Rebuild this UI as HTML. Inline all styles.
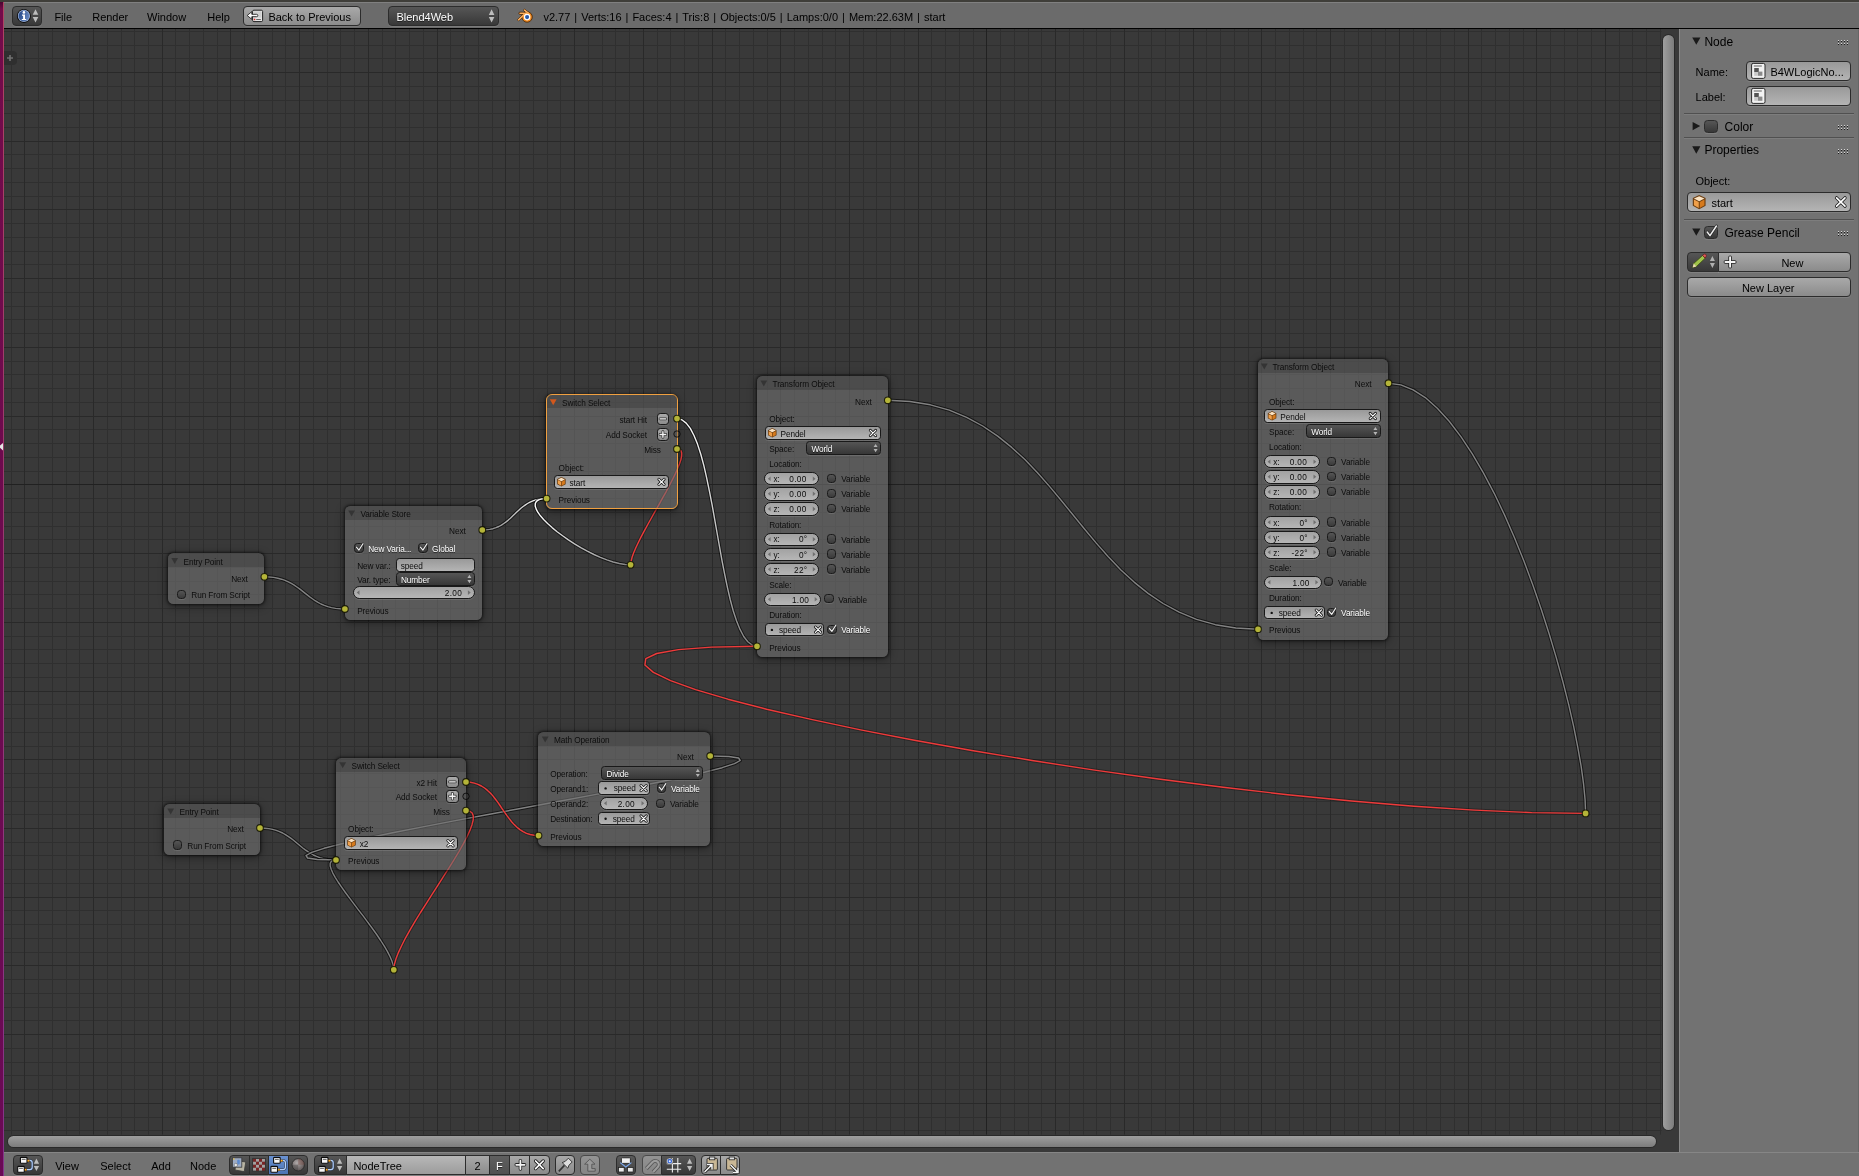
<!DOCTYPE html>
<html><head><meta charset="utf-8"><title>Blender</title>
<style>
html,body{margin:0;padding:0;}
html{overflow:hidden;width:1859px;height:1176px;}
body{width:1859px;height:1176px;overflow:hidden;position:relative;background:#393939;font-family:"Liberation Sans", sans-serif;}
.t{position:absolute;white-space:nowrap;line-height:1;font-family:"Liberation Sans", sans-serif;}
.b{position:absolute;box-sizing:border-box;}
svg{position:absolute;left:0;top:0;overflow:visible;}
#w{position:absolute;left:0;top:0;width:1859px;height:1176px;will-change:transform;overflow:hidden;}
</style></head><body><div id="w">
<svg width="1859" height="1176"><defs><linearGradient id="g0" gradientUnits="userSpaceOnUse" x1="482.3" y1="530.0" x2="546.6" y2="498.6"><stop offset="0" stop-color="#828282"/><stop offset="1" stop-color="#ffffff"/></linearGradient><linearGradient id="g1" gradientUnits="userSpaceOnUse" x1="630.6" y1="564.8" x2="546.6" y2="498.6"><stop offset="0" stop-color="#828282"/><stop offset="1" stop-color="#ffffff"/></linearGradient><linearGradient id="g2" gradientUnits="userSpaceOnUse" x1="677.0" y1="418.6" x2="757.0" y2="646.3"><stop offset="0" stop-color="#ffffff"/><stop offset="1" stop-color="#828282"/></linearGradient></defs><rect x="11" y="29" width="1" height="1105.5" fill="#2f2f2f"/><rect x="38" y="29" width="1" height="1105.5" fill="#2f2f2f"/><rect x="52" y="29" width="1" height="1105.5" fill="#2f2f2f"/><rect x="66" y="29" width="1" height="1105.5" fill="#2f2f2f"/><rect x="79" y="29" width="1" height="1105.5" fill="#2f2f2f"/><rect x="107" y="29" width="1" height="1105.5" fill="#2f2f2f"/><rect x="121" y="29" width="1" height="1105.5" fill="#2f2f2f"/><rect x="134" y="29" width="1" height="1105.5" fill="#2f2f2f"/><rect x="148" y="29" width="1" height="1105.5" fill="#2f2f2f"/><rect x="175" y="29" width="1" height="1105.5" fill="#2f2f2f"/><rect x="189" y="29" width="1" height="1105.5" fill="#2f2f2f"/><rect x="203" y="29" width="1" height="1105.5" fill="#2f2f2f"/><rect x="217" y="29" width="1" height="1105.5" fill="#2f2f2f"/><rect x="244" y="29" width="1" height="1105.5" fill="#2f2f2f"/><rect x="258" y="29" width="1" height="1105.5" fill="#2f2f2f"/><rect x="272" y="29" width="1" height="1105.5" fill="#2f2f2f"/><rect x="285" y="29" width="1" height="1105.5" fill="#2f2f2f"/><rect x="313" y="29" width="1" height="1105.5" fill="#2f2f2f"/><rect x="327" y="29" width="1" height="1105.5" fill="#2f2f2f"/><rect x="340" y="29" width="1" height="1105.5" fill="#2f2f2f"/><rect x="354" y="29" width="1" height="1105.5" fill="#2f2f2f"/><rect x="382" y="29" width="1" height="1105.5" fill="#2f2f2f"/><rect x="395" y="29" width="1" height="1105.5" fill="#2f2f2f"/><rect x="409" y="29" width="1" height="1105.5" fill="#2f2f2f"/><rect x="423" y="29" width="1" height="1105.5" fill="#2f2f2f"/><rect x="450" y="29" width="1" height="1105.5" fill="#2f2f2f"/><rect x="464" y="29" width="1" height="1105.5" fill="#2f2f2f"/><rect x="478" y="29" width="1" height="1105.5" fill="#2f2f2f"/><rect x="492" y="29" width="1" height="1105.5" fill="#2f2f2f"/><rect x="519" y="29" width="1" height="1105.5" fill="#2f2f2f"/><rect x="533" y="29" width="1" height="1105.5" fill="#2f2f2f"/><rect x="547" y="29" width="1" height="1105.5" fill="#2f2f2f"/><rect x="560" y="29" width="1" height="1105.5" fill="#2f2f2f"/><rect x="588" y="29" width="1" height="1105.5" fill="#2f2f2f"/><rect x="602" y="29" width="1" height="1105.5" fill="#2f2f2f"/><rect x="615" y="29" width="1" height="1105.5" fill="#2f2f2f"/><rect x="629" y="29" width="1" height="1105.5" fill="#2f2f2f"/><rect x="657" y="29" width="1" height="1105.5" fill="#2f2f2f"/><rect x="670" y="29" width="1" height="1105.5" fill="#2f2f2f"/><rect x="684" y="29" width="1" height="1105.5" fill="#2f2f2f"/><rect x="698" y="29" width="1" height="1105.5" fill="#2f2f2f"/><rect x="725" y="29" width="1" height="1105.5" fill="#2f2f2f"/><rect x="739" y="29" width="1" height="1105.5" fill="#2f2f2f"/><rect x="753" y="29" width="1" height="1105.5" fill="#2f2f2f"/><rect x="767" y="29" width="1" height="1105.5" fill="#2f2f2f"/><rect x="794" y="29" width="1" height="1105.5" fill="#2f2f2f"/><rect x="808" y="29" width="1" height="1105.5" fill="#2f2f2f"/><rect x="822" y="29" width="1" height="1105.5" fill="#2f2f2f"/><rect x="835" y="29" width="1" height="1105.5" fill="#2f2f2f"/><rect x="863" y="29" width="1" height="1105.5" fill="#2f2f2f"/><rect x="876" y="29" width="1" height="1105.5" fill="#2f2f2f"/><rect x="890" y="29" width="1" height="1105.5" fill="#2f2f2f"/><rect x="904" y="29" width="1" height="1105.5" fill="#2f2f2f"/><rect x="931" y="29" width="1" height="1105.5" fill="#2f2f2f"/><rect x="945" y="29" width="1" height="1105.5" fill="#2f2f2f"/><rect x="959" y="29" width="1" height="1105.5" fill="#2f2f2f"/><rect x="973" y="29" width="1" height="1105.5" fill="#2f2f2f"/><rect x="1000" y="29" width="1" height="1105.5" fill="#2f2f2f"/><rect x="1014" y="29" width="1" height="1105.5" fill="#2f2f2f"/><rect x="1028" y="29" width="1" height="1105.5" fill="#2f2f2f"/><rect x="1041" y="29" width="1" height="1105.5" fill="#2f2f2f"/><rect x="1069" y="29" width="1" height="1105.5" fill="#2f2f2f"/><rect x="1083" y="29" width="1" height="1105.5" fill="#2f2f2f"/><rect x="1096" y="29" width="1" height="1105.5" fill="#2f2f2f"/><rect x="1110" y="29" width="1" height="1105.5" fill="#2f2f2f"/><rect x="1138" y="29" width="1" height="1105.5" fill="#2f2f2f"/><rect x="1151" y="29" width="1" height="1105.5" fill="#2f2f2f"/><rect x="1165" y="29" width="1" height="1105.5" fill="#2f2f2f"/><rect x="1179" y="29" width="1" height="1105.5" fill="#2f2f2f"/><rect x="1206" y="29" width="1" height="1105.5" fill="#2f2f2f"/><rect x="1220" y="29" width="1" height="1105.5" fill="#2f2f2f"/><rect x="1234" y="29" width="1" height="1105.5" fill="#2f2f2f"/><rect x="1248" y="29" width="1" height="1105.5" fill="#2f2f2f"/><rect x="1275" y="29" width="1" height="1105.5" fill="#2f2f2f"/><rect x="1289" y="29" width="1" height="1105.5" fill="#2f2f2f"/><rect x="1303" y="29" width="1" height="1105.5" fill="#2f2f2f"/><rect x="1316" y="29" width="1" height="1105.5" fill="#2f2f2f"/><rect x="1344" y="29" width="1" height="1105.5" fill="#2f2f2f"/><rect x="1358" y="29" width="1" height="1105.5" fill="#2f2f2f"/><rect x="1371" y="29" width="1" height="1105.5" fill="#2f2f2f"/><rect x="1385" y="29" width="1" height="1105.5" fill="#2f2f2f"/><rect x="1413" y="29" width="1" height="1105.5" fill="#2f2f2f"/><rect x="1426" y="29" width="1" height="1105.5" fill="#2f2f2f"/><rect x="1440" y="29" width="1" height="1105.5" fill="#2f2f2f"/><rect x="1454" y="29" width="1" height="1105.5" fill="#2f2f2f"/><rect x="1481" y="29" width="1" height="1105.5" fill="#2f2f2f"/><rect x="1495" y="29" width="1" height="1105.5" fill="#2f2f2f"/><rect x="1509" y="29" width="1" height="1105.5" fill="#2f2f2f"/><rect x="1523" y="29" width="1" height="1105.5" fill="#2f2f2f"/><rect x="1550" y="29" width="1" height="1105.5" fill="#2f2f2f"/><rect x="1564" y="29" width="1" height="1105.5" fill="#2f2f2f"/><rect x="1577" y="29" width="1" height="1105.5" fill="#2f2f2f"/><rect x="1591" y="29" width="1" height="1105.5" fill="#2f2f2f"/><rect x="1619" y="29" width="1" height="1105.5" fill="#2f2f2f"/><rect x="1632" y="29" width="1" height="1105.5" fill="#2f2f2f"/><rect x="1646" y="29" width="1" height="1105.5" fill="#2f2f2f"/><rect x="1660" y="29" width="1" height="1105.5" fill="#2f2f2f"/><rect x="4" y="31" width="1657.5" height="1" fill="#2f2f2f"/><rect x="4" y="45" width="1657.5" height="1" fill="#2f2f2f"/><rect x="4" y="58" width="1657.5" height="1" fill="#2f2f2f"/><rect x="4" y="86" width="1657.5" height="1" fill="#2f2f2f"/><rect x="4" y="100" width="1657.5" height="1" fill="#2f2f2f"/><rect x="4" y="113" width="1657.5" height="1" fill="#2f2f2f"/><rect x="4" y="127" width="1657.5" height="1" fill="#2f2f2f"/><rect x="4" y="154" width="1657.5" height="1" fill="#2f2f2f"/><rect x="4" y="168" width="1657.5" height="1" fill="#2f2f2f"/><rect x="4" y="182" width="1657.5" height="1" fill="#2f2f2f"/><rect x="4" y="196" width="1657.5" height="1" fill="#2f2f2f"/><rect x="4" y="223" width="1657.5" height="1" fill="#2f2f2f"/><rect x="4" y="237" width="1657.5" height="1" fill="#2f2f2f"/><rect x="4" y="251" width="1657.5" height="1" fill="#2f2f2f"/><rect x="4" y="264" width="1657.5" height="1" fill="#2f2f2f"/><rect x="4" y="292" width="1657.5" height="1" fill="#2f2f2f"/><rect x="4" y="306" width="1657.5" height="1" fill="#2f2f2f"/><rect x="4" y="319" width="1657.5" height="1" fill="#2f2f2f"/><rect x="4" y="333" width="1657.5" height="1" fill="#2f2f2f"/><rect x="4" y="361" width="1657.5" height="1" fill="#2f2f2f"/><rect x="4" y="374" width="1657.5" height="1" fill="#2f2f2f"/><rect x="4" y="388" width="1657.5" height="1" fill="#2f2f2f"/><rect x="4" y="402" width="1657.5" height="1" fill="#2f2f2f"/><rect x="4" y="429" width="1657.5" height="1" fill="#2f2f2f"/><rect x="4" y="443" width="1657.5" height="1" fill="#2f2f2f"/><rect x="4" y="457" width="1657.5" height="1" fill="#2f2f2f"/><rect x="4" y="471" width="1657.5" height="1" fill="#2f2f2f"/><rect x="4" y="498" width="1657.5" height="1" fill="#2f2f2f"/><rect x="4" y="512" width="1657.5" height="1" fill="#2f2f2f"/><rect x="4" y="526" width="1657.5" height="1" fill="#2f2f2f"/><rect x="4" y="539" width="1657.5" height="1" fill="#2f2f2f"/><rect x="4" y="567" width="1657.5" height="1" fill="#2f2f2f"/><rect x="4" y="581" width="1657.5" height="1" fill="#2f2f2f"/><rect x="4" y="594" width="1657.5" height="1" fill="#2f2f2f"/><rect x="4" y="608" width="1657.5" height="1" fill="#2f2f2f"/><rect x="4" y="636" width="1657.5" height="1" fill="#2f2f2f"/><rect x="4" y="649" width="1657.5" height="1" fill="#2f2f2f"/><rect x="4" y="663" width="1657.5" height="1" fill="#2f2f2f"/><rect x="4" y="677" width="1657.5" height="1" fill="#2f2f2f"/><rect x="4" y="704" width="1657.5" height="1" fill="#2f2f2f"/><rect x="4" y="718" width="1657.5" height="1" fill="#2f2f2f"/><rect x="4" y="732" width="1657.5" height="1" fill="#2f2f2f"/><rect x="4" y="746" width="1657.5" height="1" fill="#2f2f2f"/><rect x="4" y="773" width="1657.5" height="1" fill="#2f2f2f"/><rect x="4" y="787" width="1657.5" height="1" fill="#2f2f2f"/><rect x="4" y="801" width="1657.5" height="1" fill="#2f2f2f"/><rect x="4" y="814" width="1657.5" height="1" fill="#2f2f2f"/><rect x="4" y="842" width="1657.5" height="1" fill="#2f2f2f"/><rect x="4" y="855" width="1657.5" height="1" fill="#2f2f2f"/><rect x="4" y="869" width="1657.5" height="1" fill="#2f2f2f"/><rect x="4" y="883" width="1657.5" height="1" fill="#2f2f2f"/><rect x="4" y="910" width="1657.5" height="1" fill="#2f2f2f"/><rect x="4" y="924" width="1657.5" height="1" fill="#2f2f2f"/><rect x="4" y="938" width="1657.5" height="1" fill="#2f2f2f"/><rect x="4" y="952" width="1657.5" height="1" fill="#2f2f2f"/><rect x="4" y="979" width="1657.5" height="1" fill="#2f2f2f"/><rect x="4" y="993" width="1657.5" height="1" fill="#2f2f2f"/><rect x="4" y="1007" width="1657.5" height="1" fill="#2f2f2f"/><rect x="4" y="1020" width="1657.5" height="1" fill="#2f2f2f"/><rect x="4" y="1048" width="1657.5" height="1" fill="#2f2f2f"/><rect x="4" y="1062" width="1657.5" height="1" fill="#2f2f2f"/><rect x="4" y="1075" width="1657.5" height="1" fill="#2f2f2f"/><rect x="4" y="1089" width="1657.5" height="1" fill="#2f2f2f"/><rect x="4" y="1117" width="1657.5" height="1" fill="#2f2f2f"/><rect x="4" y="1130" width="1657.5" height="1" fill="#2f2f2f"/><rect x="24" y="29" width="1" height="1105.5" fill="#292929"/><rect x="93" y="29" width="1" height="1105.5" fill="#292929"/><rect x="162" y="29" width="1" height="1105.5" fill="#292929"/><rect x="230" y="29" width="1" height="1105.5" fill="#292929"/><rect x="299" y="29" width="1" height="1105.5" fill="#292929"/><rect x="368" y="29" width="1" height="1105.5" fill="#292929"/><rect x="437" y="29" width="1" height="1105.5" fill="#292929"/><rect x="505" y="29" width="1" height="1105.5" fill="#292929"/><rect x="574" y="29" width="1" height="1105.5" fill="#292929"/><rect x="643" y="29" width="1" height="1105.5" fill="#292929"/><rect x="712" y="29" width="1" height="1105.5" fill="#292929"/><rect x="780" y="29" width="1" height="1105.5" fill="#292929"/><rect x="849" y="29" width="1" height="1105.5" fill="#292929"/><rect x="918" y="29" width="1" height="1105.5" fill="#292929"/><rect x="1055" y="29" width="1" height="1105.5" fill="#292929"/><rect x="1124" y="29" width="1" height="1105.5" fill="#292929"/><rect x="1193" y="29" width="1" height="1105.5" fill="#292929"/><rect x="1261" y="29" width="1" height="1105.5" fill="#292929"/><rect x="1330" y="29" width="1" height="1105.5" fill="#292929"/><rect x="1399" y="29" width="1" height="1105.5" fill="#292929"/><rect x="1468" y="29" width="1" height="1105.5" fill="#292929"/><rect x="1536" y="29" width="1" height="1105.5" fill="#292929"/><rect x="1605" y="29" width="1" height="1105.5" fill="#292929"/><rect x="4" y="72" width="1657.5" height="1" fill="#292929"/><rect x="4" y="141" width="1657.5" height="1" fill="#292929"/><rect x="4" y="209" width="1657.5" height="1" fill="#292929"/><rect x="4" y="278" width="1657.5" height="1" fill="#292929"/><rect x="4" y="347" width="1657.5" height="1" fill="#292929"/><rect x="4" y="416" width="1657.5" height="1" fill="#292929"/><rect x="4" y="553" width="1657.5" height="1" fill="#292929"/><rect x="4" y="622" width="1657.5" height="1" fill="#292929"/><rect x="4" y="691" width="1657.5" height="1" fill="#292929"/><rect x="4" y="759" width="1657.5" height="1" fill="#292929"/><rect x="4" y="828" width="1657.5" height="1" fill="#292929"/><rect x="4" y="897" width="1657.5" height="1" fill="#292929"/><rect x="4" y="965" width="1657.5" height="1" fill="#292929"/><rect x="4" y="1034" width="1657.5" height="1" fill="#292929"/><rect x="4" y="1103" width="1657.5" height="1" fill="#292929"/><rect x="986" y="29" width="1" height="1105.5" fill="#212121"/><rect x="4" y="484" width="1657.5" height="1" fill="#212121"/><path d="M264.4,576.8 L269.2,577.0 L273.7,577.4 L277.8,578.2 L281.5,579.2 L285.0,580.4 L288.3,581.8 L291.3,583.4 L294.2,585.1 L296.9,587.0 L299.6,588.9 L302.1,590.9 L304.6,592.9 L307.2,594.9 L309.7,596.9 L312.4,598.8 L315.1,600.7 L318.0,602.4 L321.0,604.0 L324.3,605.4 L327.8,606.6 L331.5,607.6 L335.6,608.4 L340.1,608.8 L344.9,609.0" fill="none" stroke="rgba(0,0,0,0.6)" stroke-width="3.4" stroke-linejoin="round"/><path d="M264.4,576.8 L269.2,577.0 L273.7,577.4 L277.8,578.2 L281.5,579.2 L285.0,580.4 L288.3,581.8 L291.3,583.4 L294.2,585.1 L296.9,587.0 L299.6,588.9 L302.1,590.9 L304.6,592.9 L307.2,594.9 L309.7,596.9 L312.4,598.8 L315.1,600.7 L318.0,602.4 L321.0,604.0 L324.3,605.4 L327.8,606.6 L331.5,607.6 L335.6,608.4 L340.1,608.8 L344.9,609.0" fill="none" stroke="#828282" stroke-width="1.4" stroke-linejoin="round"/><path d="M482.3,530.0 L486.2,529.8 L489.7,529.4 L493.0,528.7 L496.0,527.7 L498.8,526.5 L501.4,525.1 L503.8,523.5 L506.1,521.9 L508.3,520.1 L510.4,518.2 L512.4,516.3 L514.5,514.3 L516.5,512.3 L518.5,510.4 L520.6,508.5 L522.8,506.7 L525.1,505.1 L527.5,503.5 L530.1,502.1 L532.9,500.9 L535.9,499.9 L539.2,499.2 L542.7,498.8 L546.6,498.6" fill="none" stroke="rgba(0,0,0,0.6)" stroke-width="3.4" stroke-linejoin="round"/><path d="M482.3,530.0 L486.2,529.8 L489.7,529.4 L493.0,528.7 L496.0,527.7 L498.8,526.5 L501.4,525.1 L503.8,523.5 L506.1,521.9 L508.3,520.1 L510.4,518.2 L512.4,516.3 L514.5,514.3 L516.5,512.3 L518.5,510.4 L520.6,508.5 L522.8,506.7 L525.1,505.1 L527.5,503.5 L530.1,502.1 L532.9,500.9 L535.9,499.9 L539.2,499.2 L542.7,498.8 L546.6,498.6" fill="none" stroke="url(#g0)" stroke-width="1.4" stroke-linejoin="round"/><path d="M630.6,564.8 L625.1,564.5 L619.3,563.5 L613.2,562.0 L606.9,559.9 L600.4,557.4 L593.9,554.5 L587.3,551.2 L580.8,547.6 L574.5,543.9 L568.4,539.9 L562.6,535.8 L557.1,531.7 L552.1,527.6 L547.6,523.5 L543.6,519.5 L540.4,515.8 L537.8,512.2 L536.1,508.9 L535.2,506.0 L535.3,503.5 L536.4,501.4 L538.6,499.9 L542.0,498.9 L546.6,498.6" fill="none" stroke="rgba(0,0,0,0.6)" stroke-width="3.4" stroke-linejoin="round"/><path d="M630.6,564.8 L625.1,564.5 L619.3,563.5 L613.2,562.0 L606.9,559.9 L600.4,557.4 L593.9,554.5 L587.3,551.2 L580.8,547.6 L574.5,543.9 L568.4,539.9 L562.6,535.8 L557.1,531.7 L552.1,527.6 L547.6,523.5 L543.6,519.5 L540.4,515.8 L537.8,512.2 L536.1,508.9 L535.2,506.0 L535.3,503.5 L536.4,501.4 L538.6,499.9 L542.0,498.9 L546.6,498.6" fill="none" stroke="url(#g1)" stroke-width="1.4" stroke-linejoin="round"/><path d="M677.0,449.0 L679.4,449.5 L681.0,450.8 L681.7,453.0 L681.6,456.0 L680.9,459.6 L679.5,463.8 L677.6,468.6 L675.3,473.9 L672.5,479.5 L669.4,485.5 L666.1,491.8 L662.5,498.2 L658.8,504.8 L655.1,511.4 L651.4,518.0 L647.8,524.5 L644.3,530.8 L641.1,536.9 L638.2,542.7 L635.6,548.2 L633.5,553.2 L632.0,557.6 L631.0,561.6 L630.6,564.8" fill="none" stroke="rgba(0,0,0,0.3)" stroke-width="3.4" stroke-linejoin="round"/><path d="M677.0,449.0 L679.4,449.5 L681.0,450.8 L681.7,453.0 L681.6,456.0 L680.9,459.6 L679.5,463.8 L677.6,468.6 L675.3,473.9 L672.5,479.5 L669.4,485.5 L666.1,491.8 L662.5,498.2 L658.8,504.8 L655.1,511.4 L651.4,518.0 L647.8,524.5 L644.3,530.8 L641.1,536.9 L638.2,542.7 L635.6,548.2 L633.5,553.2 L632.0,557.6 L631.0,561.6 L630.6,564.8" fill="none" stroke="#ee3a3a" stroke-width="1.4" stroke-linejoin="round"/><path d="M677.0,418.6 L681.8,419.8 L686.2,423.1 L690.3,428.4 L694.0,435.5 L697.5,444.1 L700.8,454.2 L703.8,465.4 L706.6,477.6 L709.3,490.6 L712.0,504.3 L714.5,518.3 L717.0,532.5 L719.5,546.6 L722.0,560.6 L724.7,574.3 L727.4,587.3 L730.2,599.5 L733.2,610.7 L736.5,620.8 L740.0,629.4 L743.7,636.5 L747.8,641.8 L752.2,645.1 L757.0,646.3" fill="none" stroke="rgba(0,0,0,0.6)" stroke-width="3.4" stroke-linejoin="round"/><path d="M677.0,418.6 L681.8,419.8 L686.2,423.1 L690.3,428.4 L694.0,435.5 L697.5,444.1 L700.8,454.2 L703.8,465.4 L706.6,477.6 L709.3,490.6 L712.0,504.3 L714.5,518.3 L717.0,532.5 L719.5,546.6 L722.0,560.6 L724.7,574.3 L727.4,587.3 L730.2,599.5 L733.2,610.7 L736.5,620.8 L740.0,629.4 L743.7,636.5 L747.8,641.8 L752.2,645.1 L757.0,646.3" fill="none" stroke="url(#g2)" stroke-width="1.4" stroke-linejoin="round"/><path d="M887.8,400.3 L910.0,401.5 L930.4,404.8 L949.3,410.1 L966.6,417.3 L982.7,426.0 L997.7,436.1 L1011.7,447.4 L1024.9,459.6 L1037.5,472.7 L1049.5,486.4 L1061.3,500.5 L1072.9,514.8 L1084.5,529.0 L1096.3,543.1 L1108.3,556.8 L1120.9,569.9 L1134.1,582.1 L1148.1,593.4 L1163.1,603.5 L1179.2,612.2 L1196.5,619.4 L1215.4,624.7 L1235.8,628.0 L1258.0,629.2" fill="none" stroke="rgba(0,0,0,0.6)" stroke-width="3.4" stroke-linejoin="round"/><path d="M887.8,400.3 L910.0,401.5 L930.4,404.8 L949.3,410.1 L966.6,417.3 L982.7,426.0 L997.7,436.1 L1011.7,447.4 L1024.9,459.6 L1037.5,472.7 L1049.5,486.4 L1061.3,500.5 L1072.9,514.8 L1084.5,529.0 L1096.3,543.1 L1108.3,556.8 L1120.9,569.9 L1134.1,582.1 L1148.1,593.4 L1163.1,603.5 L1179.2,612.2 L1196.5,619.4 L1215.4,624.7 L1235.8,628.0 L1258.0,629.2" fill="none" stroke="#828282" stroke-width="1.4" stroke-linejoin="round"/><path d="M1388.5,383.2 L1400.8,384.9 L1413.1,389.8 L1425.3,397.6 L1437.3,408.2 L1449.2,421.3 L1460.9,436.6 L1472.3,453.8 L1483.4,472.8 L1494.2,493.3 L1504.6,515.1 L1514.5,537.8 L1524.0,561.3 L1533.0,585.4 L1541.4,609.7 L1549.2,634.0 L1556.4,658.1 L1562.9,681.7 L1568.7,704.6 L1573.7,726.6 L1577.8,747.3 L1581.2,766.6 L1583.6,784.2 L1585.1,799.9 L1585.6,813.4" fill="none" stroke="rgba(0,0,0,0.6)" stroke-width="3.4" stroke-linejoin="round"/><path d="M1388.5,383.2 L1400.8,384.9 L1413.1,389.8 L1425.3,397.6 L1437.3,408.2 L1449.2,421.3 L1460.9,436.6 L1472.3,453.8 L1483.4,472.8 L1494.2,493.3 L1504.6,515.1 L1514.5,537.8 L1524.0,561.3 L1533.0,585.4 L1541.4,609.7 L1549.2,634.0 L1556.4,658.1 L1562.9,681.7 L1568.7,704.6 L1573.7,726.6 L1577.8,747.3 L1581.2,766.6 L1583.6,784.2 L1585.1,799.9 L1585.6,813.4" fill="none" stroke="#828282" stroke-width="1.4" stroke-linejoin="round"/><path d="M1585.6,813.4 L1531.8,812.6 L1474.4,810.1 L1414.1,806.2 L1351.6,801.0 L1287.7,794.7 L1223.1,787.3 L1158.5,779.0 L1094.6,770.1 L1032.1,760.5 L971.8,750.5 L914.4,740.3 L860.6,729.9 L811.1,719.4 L766.6,709.2 L727.9,699.2 L695.6,689.6 L670.6,680.7 L653.4,672.4 L644.9,665.0 L645.8,658.7 L656.7,653.5 L678.4,649.6 L711.6,647.1 L757.0,646.3" fill="none" stroke="rgba(0,0,0,0.3)" stroke-width="3.4" stroke-linejoin="round"/><path d="M1585.6,813.4 L1531.8,812.6 L1474.4,810.1 L1414.1,806.2 L1351.6,801.0 L1287.7,794.7 L1223.1,787.3 L1158.5,779.0 L1094.6,770.1 L1032.1,760.5 L971.8,750.5 L914.4,740.3 L860.6,729.9 L811.1,719.4 L766.6,709.2 L727.9,699.2 L695.6,689.6 L670.6,680.7 L653.4,672.4 L644.9,665.0 L645.8,658.7 L656.7,653.5 L678.4,649.6 L711.6,647.1 L757.0,646.3" fill="none" stroke="#ee3a3a" stroke-width="1.4" stroke-linejoin="round"/><path d="M260.0,828.0 L264.6,828.2 L268.8,828.6 L272.6,829.4 L276.2,830.4 L279.5,831.6 L282.6,833.0 L285.4,834.6 L288.1,836.3 L290.7,838.1 L293.2,840.0 L295.6,842.0 L298.0,844.0 L300.4,846.0 L302.8,848.0 L305.3,849.9 L307.9,851.7 L310.6,853.4 L313.4,855.0 L316.5,856.4 L319.8,857.6 L323.4,858.6 L327.2,859.4 L331.4,859.8 L336.0,860.0" fill="none" stroke="rgba(0,0,0,0.6)" stroke-width="3.4" stroke-linejoin="round"/><path d="M260.0,828.0 L264.6,828.2 L268.8,828.6 L272.6,829.4 L276.2,830.4 L279.5,831.6 L282.6,833.0 L285.4,834.6 L288.1,836.3 L290.7,838.1 L293.2,840.0 L295.6,842.0 L298.0,844.0 L300.4,846.0 L302.8,848.0 L305.3,849.9 L307.9,851.7 L310.6,853.4 L313.4,855.0 L316.5,856.4 L319.8,857.6 L323.4,858.6 L327.2,859.4 L331.4,859.8 L336.0,860.0" fill="none" stroke="#828282" stroke-width="1.4" stroke-linejoin="round"/><path d="M710.2,756.0 L728.9,756.5 L738.6,758.0 L740.2,760.5 L734.5,763.7 L722.2,767.7 L704.4,772.2 L681.6,777.4 L654.8,783.0 L624.7,788.9 L592.2,795.1 L558.0,801.5 L523.1,808.0 L488.2,814.5 L454.0,820.9 L421.5,827.1 L391.4,833.0 L364.6,838.6 L341.8,843.8 L324.0,848.3 L311.7,852.3 L306.0,855.5 L307.6,858.0 L317.3,859.5 L336.0,860.0" fill="none" stroke="rgba(0,0,0,0.6)" stroke-width="3.4" stroke-linejoin="round"/><path d="M710.2,756.0 L728.9,756.5 L738.6,758.0 L740.2,760.5 L734.5,763.7 L722.2,767.7 L704.4,772.2 L681.6,777.4 L654.8,783.0 L624.7,788.9 L592.2,795.1 L558.0,801.5 L523.1,808.0 L488.2,814.5 L454.0,820.9 L421.5,827.1 L391.4,833.0 L364.6,838.6 L341.8,843.8 L324.0,848.3 L311.7,852.3 L306.0,855.5 L307.6,858.0 L317.3,859.5 L336.0,860.0" fill="none" stroke="#828282" stroke-width="1.4" stroke-linejoin="round"/><path d="M393.8,969.8 L393.4,965.9 L392.1,961.6 L390.1,956.8 L387.5,951.6 L384.3,946.2 L380.7,940.5 L376.7,934.5 L372.4,928.5 L367.9,922.4 L363.3,916.2 L358.6,910.1 L354.1,904.1 L349.6,898.2 L345.4,892.5 L341.6,887.1 L338.1,882.0 L335.2,877.3 L332.8,873.1 L331.2,869.3 L330.2,866.1 L330.2,863.5 L331.1,861.6 L333.0,860.4 L336.0,860.0" fill="none" stroke="rgba(0,0,0,0.6)" stroke-width="3.4" stroke-linejoin="round"/><path d="M393.8,969.8 L393.4,965.9 L392.1,961.6 L390.1,956.8 L387.5,951.6 L384.3,946.2 L380.7,940.5 L376.7,934.5 L372.4,928.5 L367.9,922.4 L363.3,916.2 L358.6,910.1 L354.1,904.1 L349.6,898.2 L345.4,892.5 L341.6,887.1 L338.1,882.0 L335.2,877.3 L332.8,873.1 L331.2,869.3 L330.2,866.1 L330.2,863.5 L331.1,861.6 L333.0,860.4 L336.0,860.0" fill="none" stroke="#828282" stroke-width="1.4" stroke-linejoin="round"/><path d="M466.0,810.6 L469.8,811.2 L472.2,813.0 L473.3,816.0 L473.2,819.9 L472.0,824.7 L469.9,830.4 L467.0,836.8 L463.3,843.9 L459.0,851.5 L454.2,859.5 L449.0,867.9 L443.4,876.7 L437.7,885.6 L431.9,894.6 L426.2,903.6 L420.5,912.5 L415.2,921.2 L410.2,929.7 L405.6,937.8 L401.7,945.5 L398.4,952.6 L395.9,959.1 L394.3,964.8 L393.8,969.8" fill="none" stroke="rgba(0,0,0,0.3)" stroke-width="3.4" stroke-linejoin="round"/><path d="M466.0,810.6 L469.8,811.2 L472.2,813.0 L473.3,816.0 L473.2,819.9 L472.0,824.7 L469.9,830.4 L467.0,836.8 L463.3,843.9 L459.0,851.5 L454.2,859.5 L449.0,867.9 L443.4,876.7 L437.7,885.6 L431.9,894.6 L426.2,903.6 L420.5,912.5 L415.2,921.2 L410.2,929.7 L405.6,937.8 L401.7,945.5 L398.4,952.6 L395.9,959.1 L394.3,964.8 L393.8,969.8" fill="none" stroke="#ee3a3a" stroke-width="1.4" stroke-linejoin="round"/><path d="M466.0,782.0 L470.3,782.3 L474.3,783.1 L478.0,784.3 L481.4,786.0 L484.6,788.0 L487.5,790.4 L490.3,793.0 L492.9,795.9 L495.3,799.0 L497.7,802.2 L500.0,805.5 L502.2,808.8 L504.5,812.1 L506.8,815.4 L509.2,818.6 L511.6,821.7 L514.2,824.6 L517.0,827.2 L519.9,829.6 L523.1,831.6 L526.5,833.3 L530.2,834.5 L534.2,835.3 L538.5,835.6" fill="none" stroke="rgba(0,0,0,0.3)" stroke-width="3.4" stroke-linejoin="round"/><path d="M466.0,782.0 L470.3,782.3 L474.3,783.1 L478.0,784.3 L481.4,786.0 L484.6,788.0 L487.5,790.4 L490.3,793.0 L492.9,795.9 L495.3,799.0 L497.7,802.2 L500.0,805.5 L502.2,808.8 L504.5,812.1 L506.8,815.4 L509.2,818.6 L511.6,821.7 L514.2,824.6 L517.0,827.2 L519.9,829.6 L523.1,831.6 L526.5,833.3 L530.2,834.5 L534.2,835.3 L538.5,835.6" fill="none" stroke="#ee3a3a" stroke-width="1.4" stroke-linejoin="round"/></svg>
<div class="b" style="left:167.90px;top:553.30px;width:96.60px;height:51.00px;border-radius:5.5px;background:rgba(114,114,114,0.60);box-shadow:0 0 2.5px 0.6px rgba(0,0,0,0.55),0 2px 9px 1px rgba(0,0,0,0.36);overflow:hidden;"></div>
<div class="b" style="left:167.90px;top:553.30px;width:96.60px;height:14.20px;border-radius:5.5px 5.5px 0 0;background:rgba(30,30,30,0.23);"></div>
<svg width="1859" height="1176"><path d="M171.3,557.9 h6.8 l-3.4,6z" fill="rgba(45,45,45,0.75)"/></svg>
<div class="t" style="top:559px;font-size:8.25px;color:#0d0d0d;letter-spacing:-0.1px;left:183.50px;">Entry Point</div>
<div class="t" style="top:576px;font-size:8.25px;color:#0d0d0d;letter-spacing:-0.1px;right:1611.30px;">Next</div>
<div class="b" style="left:176.70px;top:589.80px;width:9.40px;height:9.40px;border:1px solid #191919;border-radius:3.4px;background:linear-gradient(#555,#3a3a3a);box-shadow:0 1px 0 rgba(255,255,255,0.1);"></div>
<div class="t" style="top:592px;font-size:8.25px;color:#0d0d0d;letter-spacing:-0.1px;left:191.30px;">Run From Script</div>
<div class="b" style="left:163.90px;top:803.80px;width:96.60px;height:51.00px;border-radius:5.5px;background:rgba(114,114,114,0.60);box-shadow:0 0 2.5px 0.6px rgba(0,0,0,0.55),0 2px 9px 1px rgba(0,0,0,0.36);overflow:hidden;"></div>
<div class="b" style="left:163.90px;top:803.80px;width:96.60px;height:14.20px;border-radius:5.5px 5.5px 0 0;background:rgba(30,30,30,0.23);"></div>
<svg width="1859" height="1176"><path d="M167.3,808.4 h6.8 l-3.4,6z" fill="rgba(45,45,45,0.75)"/></svg>
<div class="t" style="top:809px;font-size:8.25px;color:#0d0d0d;letter-spacing:-0.1px;left:179.50px;">Entry Point</div>
<div class="t" style="top:826px;font-size:8.25px;color:#0d0d0d;letter-spacing:-0.1px;right:1615.30px;">Next</div>
<div class="b" style="left:172.70px;top:840.30px;width:9.40px;height:9.40px;border:1px solid #191919;border-radius:3.4px;background:linear-gradient(#555,#3a3a3a);box-shadow:0 1px 0 rgba(255,255,255,0.1);"></div>
<div class="t" style="top:843px;font-size:8.25px;color:#0d0d0d;letter-spacing:-0.1px;left:187.30px;">Run From Script</div>
<div class="b" style="left:344.80px;top:505.80px;width:137.60px;height:113.80px;border-radius:5.5px;background:rgba(114,114,114,0.60);box-shadow:0 0 2.5px 0.6px rgba(0,0,0,0.55),0 2px 9px 1px rgba(0,0,0,0.36);overflow:hidden;"></div>
<div class="b" style="left:344.80px;top:505.80px;width:137.60px;height:14.20px;border-radius:5.5px 5.5px 0 0;background:rgba(30,30,30,0.23);"></div>
<svg width="1859" height="1176"><path d="M348.2,510.4 h6.8 l-3.4,6z" fill="rgba(45,45,45,0.75)"/></svg>
<div class="t" style="top:511px;font-size:8.25px;color:#0d0d0d;letter-spacing:-0.1px;left:360.40px;">Variable Store</div>
<div class="t" style="top:528px;font-size:8.25px;color:#0d0d0d;letter-spacing:-0.1px;right:1393.40px;">Next</div>
<div class="b" style="left:354.30px;top:543.40px;width:9.40px;height:9.40px;border:1px solid #191919;border-radius:3.4px;background:linear-gradient(#555,#3a3a3a);box-shadow:0 1px 0 rgba(255,255,255,0.1);"></div>
<svg width="1859" height="1176"><path d="M356.4,547.2 L358.9,550.1 L363.0,543.7" stroke="#262626" stroke-width="2.3" fill="none" stroke-linejoin="round" stroke-linecap="round"/><path d="M356.4,547.2 L358.9,550.1 L363.0,543.7" stroke="#eee" stroke-width="1.2" fill="none" stroke-linejoin="round" stroke-linecap="round"/></svg>
<div class="t" style="top:546px;font-size:8.25px;color:#fff;letter-spacing:-0.1px;left:368.20px;text-shadow:0 1px 0 rgba(0,0,0,0.6);">New Varia...</div>
<div class="b" style="left:418.30px;top:543.40px;width:9.40px;height:9.40px;border:1px solid #191919;border-radius:3.4px;background:linear-gradient(#555,#3a3a3a);box-shadow:0 1px 0 rgba(255,255,255,0.1);"></div>
<svg width="1859" height="1176"><path d="M420.4,547.2 L422.9,550.1 L427.0,543.7" stroke="#262626" stroke-width="2.3" fill="none" stroke-linejoin="round" stroke-linecap="round"/><path d="M420.4,547.2 L422.9,550.1 L427.0,543.7" stroke="#eee" stroke-width="1.2" fill="none" stroke-linejoin="round" stroke-linecap="round"/></svg>
<div class="t" style="top:546px;font-size:8.25px;color:#fff;letter-spacing:-0.1px;left:432.10px;text-shadow:0 1px 0 rgba(0,0,0,0.6);">Global</div>
<div class="t" style="top:563px;font-size:8.25px;color:#0d0d0d;letter-spacing:-0.1px;left:357.20px;">New var.:</div>
<div class="b" style="left:395.70px;top:558.00px;width:78.90px;height:13.70px;border:1px solid #191919;border-radius:3.5px;background:linear-gradient(#999,#b4b4b4);box-shadow:0 1px 0 rgba(255,255,255,0.12);"></div>
<div class="t" style="top:563px;font-size:8.25px;color:#0d0d0d;letter-spacing:-0.1px;left:400.80px;">speed</div>
<div class="t" style="top:577px;font-size:8.25px;color:#0d0d0d;letter-spacing:-0.1px;left:357.20px;">Var. type:</div>
<div class="b" style="left:395.70px;top:572.20px;width:78.90px;height:13.70px;border:1px solid #191919;border-radius:3.5px;background:linear-gradient(#555,#373737);box-shadow:0 1px 0 rgba(255,255,255,0.1);"></div>
<svg width="1859" height="1176"><path d="M469.4,574.8 l2,3.2 h-4z M469.4,583.2 l2,-3.2 h-4z" fill="#b4b4b4"/></svg>
<div class="t" style="top:577px;font-size:8.25px;color:#fff;letter-spacing:-0.1px;left:400.90px;text-shadow:0 1px 0 rgba(0,0,0,0.6);">Number</div>
<div class="b" style="left:352.80px;top:586.00px;width:121.80px;height:13.30px;border:1px solid #191919;border-radius:6.65px;background:linear-gradient(#a2a2a2,#b6b6b6);box-shadow:0 1px 0 rgba(255,255,255,0.12);"></div>
<svg width="1859" height="1176"><path d="M356.7,592.6 l2.8,-2.3 v4.6z M470.7,592.6 l-2.8,-2.3 v4.6z" fill="#707070"/></svg>
<div class="t" style="top:590px;font-size:8.25px;color:#0d0d0d;letter-spacing:-0.1px;right:1396.90px;letter-spacing:0.3px;">2.00</div>
<div class="t" style="top:608px;font-size:8.25px;color:#0d0d0d;letter-spacing:-0.1px;left:357.20px;">Previous</div>
<div class="b" style="left:546.40px;top:394.70px;width:130.60px;height:113.90px;border-radius:5.5px;background:rgba(114,114,114,0.60);box-shadow:0 0 2.5px 0.6px rgba(0,0,0,0.55),0 2px 9px 1px rgba(0,0,0,0.36);overflow:hidden;"></div>
<div class="b" style="left:546.40px;top:394.70px;width:130.60px;height:13.40px;border-radius:5.5px 5.5px 0 0;background:rgba(30,30,30,0.23);"></div>
<div class="b" style="left:545.80px;top:394.10px;width:131.80px;height:115.10px;border:1.3px solid #f0a040;border-radius:6px;"></div>
<svg width="1859" height="1176"><path d="M549.8,399.3 h6.8 l-3.4,6z" fill="#d2581d"/></svg>
<div class="t" style="top:400px;font-size:8.25px;color:#0d0d0d;letter-spacing:-0.1px;left:562.00px;">Switch Select</div>
<div class="t" style="top:417px;font-size:8.25px;color:#0d0d0d;letter-spacing:-0.1px;right:1212.00px;">start Hit</div>
<div class="b" style="left:656.50px;top:412.65px;width:12.80px;height:12.60px;border:1px solid #191919;border-radius:3.4px;background:linear-gradient(#aaa,#8c8c8c);box-shadow:0 1px 0 rgba(255,255,255,0.1);"></div>
<svg width="1859" height="1176"><path d="M660.1,418.9 h5.6" stroke="#333" stroke-width="2.8" fill="none" stroke-linecap="round"/><path d="M660.1,418.9 h5.6" stroke="#f4f4f4" stroke-width="1.4" fill="none" stroke-linecap="round"/></svg>
<div class="t" style="top:432px;font-size:8.25px;color:#0d0d0d;letter-spacing:-0.1px;right:1212.00px;">Add Socket</div>
<div class="b" style="left:656.50px;top:428.20px;width:12.80px;height:12.60px;border:1px solid #191919;border-radius:3.4px;background:linear-gradient(#aaa,#8c8c8c);box-shadow:0 1px 0 rgba(255,255,255,0.1);"></div>
<svg width="1859" height="1176"><path d="M660.1,434.5 h5.6 M662.9,431.7 v5.6" stroke="#333" stroke-width="2.8" fill="none" stroke-linecap="round"/><path d="M660.1,434.5 h5.6 M662.9,431.7 v5.6" stroke="#f4f4f4" stroke-width="1.4" fill="none" stroke-linecap="round"/></svg>
<div class="t" style="top:447px;font-size:8.25px;color:#0d0d0d;letter-spacing:-0.1px;right:1198.20px;">Miss</div>
<div class="t" style="top:465px;font-size:8.25px;color:#0d0d0d;letter-spacing:-0.1px;left:558.60px;">Object:</div>
<div class="b" style="left:553.60px;top:474.80px;width:115.70px;height:14.00px;border:1px solid #191919;border-radius:3.5px;background:linear-gradient(#999,#b4b4b4);box-shadow:0 1px 0 rgba(255,255,255,0.12);"></div>
<svg width="1859" height="1176"><polygon points="561.38,477.00 565.65,479.09 565.65,484.22 561.38,486.50 557.10,484.22 557.10,479.09" fill="#6b3d10"/><polygon points="561.38,477.76 564.89,479.38 561.38,481.18 557.86,479.38" fill="#fbe3c3"/><polygon points="557.86,480.04 561.09,481.75 561.09,485.64 557.86,483.84" fill="#f0a04a"/><polygon points="564.89,480.04 561.75,481.75 561.75,485.64 564.89,483.84" fill="#d67a1c"/></svg>
<div class="t" style="top:480px;font-size:8.25px;color:#0d0d0d;letter-spacing:-0.1px;left:569.60px;">start</div>
<svg width="1859" height="1176"><path d="M658.8,479.2 L664.2,484.6 M664.2,479.2 L658.8,484.6" stroke="#1a1a1a" stroke-width="2.8" stroke-linecap="round" fill="none"/><path d="M658.8,479.2 L664.2,484.6 M664.2,479.2 L658.8,484.6" stroke="#fff" stroke-width="1.2" stroke-linecap="round" fill="none"/></svg>
<div class="t" style="top:497px;font-size:8.25px;color:#0d0d0d;letter-spacing:-0.1px;left:558.60px;">Previous</div>
<div class="b" style="left:335.90px;top:757.70px;width:130.50px;height:112.20px;border-radius:5.5px;background:rgba(114,114,114,0.60);box-shadow:0 0 2.5px 0.6px rgba(0,0,0,0.55),0 2px 9px 1px rgba(0,0,0,0.36);overflow:hidden;"></div>
<div class="b" style="left:335.90px;top:757.70px;width:130.50px;height:14.00px;border-radius:5.5px 5.5px 0 0;background:rgba(30,30,30,0.23);"></div>
<svg width="1859" height="1176"><path d="M339.3,762.3 h6.8 l-3.4,6z" fill="rgba(45,45,45,0.75)"/></svg>
<div class="t" style="top:763px;font-size:8.25px;color:#0d0d0d;letter-spacing:-0.1px;left:351.50px;">Switch Select</div>
<div class="t" style="top:780px;font-size:8.25px;color:#0d0d0d;letter-spacing:-0.1px;right:1422.10px;">x2 Hit</div>
<div class="b" style="left:446.00px;top:775.55px;width:12.80px;height:12.60px;border:1px solid #191919;border-radius:3.4px;background:linear-gradient(#aaa,#8c8c8c);box-shadow:0 1px 0 rgba(255,255,255,0.1);"></div>
<svg width="1859" height="1176"><path d="M449.6,781.9 h5.6" stroke="#333" stroke-width="2.8" fill="none" stroke-linecap="round"/><path d="M449.6,781.9 h5.6" stroke="#f4f4f4" stroke-width="1.4" fill="none" stroke-linecap="round"/></svg>
<div class="t" style="top:794px;font-size:8.25px;color:#0d0d0d;letter-spacing:-0.1px;right:1422.10px;">Add Socket</div>
<div class="b" style="left:446.00px;top:789.95px;width:12.80px;height:12.60px;border:1px solid #191919;border-radius:3.4px;background:linear-gradient(#aaa,#8c8c8c);box-shadow:0 1px 0 rgba(255,255,255,0.1);"></div>
<svg width="1859" height="1176"><path d="M449.6,796.2 h5.6 M452.4,793.5 v5.6" stroke="#333" stroke-width="2.8" fill="none" stroke-linecap="round"/><path d="M449.6,796.2 h5.6 M452.4,793.5 v5.6" stroke="#f4f4f4" stroke-width="1.4" fill="none" stroke-linecap="round"/></svg>
<div class="t" style="top:809px;font-size:8.25px;color:#0d0d0d;letter-spacing:-0.1px;right:1409.20px;">Miss</div>
<div class="t" style="top:826px;font-size:8.25px;color:#0d0d0d;letter-spacing:-0.1px;left:348.10px;">Object:</div>
<div class="b" style="left:343.70px;top:835.90px;width:114.60px;height:14.40px;border:1px solid #191919;border-radius:3.5px;background:linear-gradient(#999,#b4b4b4);box-shadow:0 1px 0 rgba(255,255,255,0.12);"></div>
<svg width="1859" height="1176"><polygon points="351.47,838.10 355.75,840.19 355.75,845.32 351.47,847.60 347.20,845.32 347.20,840.19" fill="#6b3d10"/><polygon points="351.47,838.86 354.99,840.48 351.47,842.28 347.96,840.48" fill="#fbe3c3"/><polygon points="347.96,841.14 351.19,842.85 351.19,846.75 347.96,844.94" fill="#f0a04a"/><polygon points="354.99,841.14 351.85,842.85 351.85,846.75 354.99,844.94" fill="#d67a1c"/></svg>
<div class="t" style="top:841px;font-size:8.25px;color:#0d0d0d;letter-spacing:-0.1px;left:359.70px;">x2</div>
<svg width="1859" height="1176"><path d="M447.8,840.5 L453.2,846.0 M453.2,840.5 L447.8,846.0" stroke="#1a1a1a" stroke-width="2.8" stroke-linecap="round" fill="none"/><path d="M447.8,840.5 L453.2,846.0 M453.2,840.5 L447.8,846.0" stroke="#fff" stroke-width="1.2" stroke-linecap="round" fill="none"/></svg>
<div class="t" style="top:858px;font-size:8.25px;color:#0d0d0d;letter-spacing:-0.1px;left:348.10px;">Previous</div>
<div class="b" style="left:538.40px;top:731.80px;width:171.80px;height:113.80px;border-radius:5.5px;background:rgba(114,114,114,0.60);box-shadow:0 0 2.5px 0.6px rgba(0,0,0,0.55),0 2px 9px 1px rgba(0,0,0,0.36);overflow:hidden;"></div>
<div class="b" style="left:538.40px;top:731.80px;width:171.80px;height:14.20px;border-radius:5.5px 5.5px 0 0;background:rgba(30,30,30,0.23);"></div>
<svg width="1859" height="1176"><path d="M541.8,736.4 h6.8 l-3.4,6z" fill="rgba(45,45,45,0.75)"/></svg>
<div class="t" style="top:737px;font-size:8.25px;color:#0d0d0d;letter-spacing:-0.1px;left:554.00px;">Math Operation</div>
<div class="t" style="top:754px;font-size:8.25px;color:#0d0d0d;letter-spacing:-0.1px;right:1165.40px;">Next</div>
<div class="t" style="top:771px;font-size:8.25px;color:#0d0d0d;letter-spacing:-0.1px;left:550.20px;">Operation:</div>
<div class="b" style="left:601.20px;top:766.00px;width:101.80px;height:13.90px;border:1px solid #191919;border-radius:3.5px;background:linear-gradient(#555,#373737);box-shadow:0 1px 0 rgba(255,255,255,0.1);"></div>
<svg width="1859" height="1176"><path d="M697.8,768.7 l2,3.2 h-4z M697.8,777.1 l2,-3.2 h-4z" fill="#b4b4b4"/></svg>
<div class="t" style="top:771px;font-size:8.25px;color:#fff;letter-spacing:-0.1px;left:606.40px;text-shadow:0 1px 0 rgba(0,0,0,0.6);">Divide</div>
<div class="t" style="top:786px;font-size:8.25px;color:#0d0d0d;letter-spacing:-0.1px;left:550.20px;">Operand1:</div>
<div class="b" style="left:598.20px;top:781.20px;width:51.60px;height:13.50px;border:1px solid #191919;border-radius:3.5px;background:linear-gradient(#999,#b4b4b4);box-shadow:0 1px 0 rgba(255,255,255,0.12);"></div>
<svg width="1859" height="1176"><circle cx="605.6" cy="788.4" r="1.2" fill="#111"/></svg>
<div class="t" style="top:785px;font-size:8.25px;color:#0d0d0d;letter-spacing:-0.1px;left:613.80px;">speed</div>
<svg width="1859" height="1176"><path d="M640.9,785.4 L646.3,790.8 M646.3,785.4 L640.9,790.8" stroke="#1a1a1a" stroke-width="2.8" stroke-linecap="round" fill="none"/><path d="M640.9,785.4 L646.3,790.8 M646.3,785.4 L640.9,790.8" stroke="#fff" stroke-width="1.2" stroke-linecap="round" fill="none"/></svg>
<div class="b" style="left:657.10px;top:783.30px;width:9.40px;height:9.40px;border:1px solid #191919;border-radius:3.4px;background:linear-gradient(#555,#3a3a3a);box-shadow:0 1px 0 rgba(255,255,255,0.1);"></div>
<svg width="1859" height="1176"><path d="M659.2,787.1 L661.7,790.0 L665.8,783.6" stroke="#262626" stroke-width="2.3" fill="none" stroke-linejoin="round" stroke-linecap="round"/><path d="M659.2,787.1 L661.7,790.0 L665.8,783.6" stroke="#eee" stroke-width="1.2" fill="none" stroke-linejoin="round" stroke-linecap="round"/></svg>
<div class="t" style="top:786px;font-size:8.25px;color:#fff;letter-spacing:-0.1px;left:671.00px;text-shadow:0 1px 0 rgba(0,0,0,0.6);">Variable</div>
<div class="t" style="top:801px;font-size:8.25px;color:#0d0d0d;letter-spacing:-0.1px;left:550.20px;">Operand2:</div>
<div class="b" style="left:600.00px;top:796.60px;width:48.20px;height:13.30px;border:1px solid #191919;border-radius:6.65px;background:linear-gradient(#a2a2a2,#b6b6b6);box-shadow:0 1px 0 rgba(255,255,255,0.12);"></div>
<svg width="1859" height="1176"><path d="M603.9,803.2 l2.8,-2.3 v4.6z M644.3,803.2 l-2.8,-2.3 v4.6z" fill="#707070"/></svg>
<div class="t" style="top:801px;font-size:8.25px;color:#0d0d0d;letter-spacing:-0.1px;right:1224.00px;letter-spacing:0.3px;">2.00</div>
<div class="b" style="left:655.90px;top:798.50px;width:9.40px;height:9.40px;border:1px solid #191919;border-radius:3.4px;background:linear-gradient(#555,#3a3a3a);box-shadow:0 1px 0 rgba(255,255,255,0.1);"></div>
<div class="t" style="top:801px;font-size:8.25px;color:#0d0d0d;letter-spacing:-0.1px;left:670.00px;">Variable</div>
<div class="t" style="top:816px;font-size:8.25px;color:#0d0d0d;letter-spacing:-0.1px;left:550.20px;">Destination:</div>
<div class="b" style="left:598.20px;top:811.60px;width:51.60px;height:13.50px;border:1px solid #191919;border-radius:3.5px;background:linear-gradient(#999,#b4b4b4);box-shadow:0 1px 0 rgba(255,255,255,0.12);"></div>
<svg width="1859" height="1176"><circle cx="605.6" cy="818.8" r="1.2" fill="#111"/></svg>
<div class="t" style="top:816px;font-size:8.25px;color:#0d0d0d;letter-spacing:-0.1px;left:612.80px;">speed</div>
<svg width="1859" height="1176"><path d="M640.9,815.8 L646.3,821.2 M646.3,815.8 L640.9,821.2" stroke="#1a1a1a" stroke-width="2.8" stroke-linecap="round" fill="none"/><path d="M640.9,815.8 L646.3,821.2 M646.3,815.8 L640.9,821.2" stroke="#fff" stroke-width="1.2" stroke-linecap="round" fill="none"/></svg>
<div class="t" style="top:834px;font-size:8.25px;color:#0d0d0d;letter-spacing:-0.1px;left:550.20px;">Previous</div>
<div class="b" style="left:757.00px;top:376.00px;width:130.80px;height:280.60px;border-radius:5.5px;background:rgba(114,114,114,0.60);box-shadow:0 0 2.5px 0.6px rgba(0,0,0,0.55),0 2px 9px 1px rgba(0,0,0,0.36);overflow:hidden;"></div>
<div class="b" style="left:757.00px;top:376.00px;width:130.80px;height:14.20px;border-radius:5.5px 5.5px 0 0;background:rgba(30,30,30,0.23);"></div>
<svg width="1859" height="1176"><path d="M760.4,380.6 h6.8 l-3.4,6z" fill="rgba(45,45,45,0.75)"/></svg>
<div class="t" style="top:381px;font-size:8.25px;color:#0d0d0d;letter-spacing:-0.1px;left:772.60px;">Transform Object</div>
<div class="t" style="top:399px;font-size:8.25px;color:#0d0d0d;letter-spacing:-0.1px;right:987.40px;">Next</div>
<div class="t" style="top:416px;font-size:8.25px;color:#0d0d0d;letter-spacing:-0.1px;left:769.20px;">Object:</div>
<div class="b" style="left:764.50px;top:425.90px;width:116.30px;height:13.90px;border:1px solid #191919;border-radius:3.5px;background:linear-gradient(#999,#b4b4b4);box-shadow:0 1px 0 rgba(255,255,255,0.12);"></div>
<svg width="1859" height="1176"><polygon points="772.27,428.10 776.55,430.19 776.55,435.32 772.27,437.60 768.00,435.32 768.00,430.19" fill="#6b3d10"/><polygon points="772.27,428.86 775.79,430.48 772.27,432.28 768.76,430.48" fill="#fbe3c3"/><polygon points="768.76,431.14 771.99,432.85 771.99,436.75 768.76,434.94" fill="#f0a04a"/><polygon points="775.79,431.14 772.65,432.85 772.65,436.75 775.79,434.94" fill="#d67a1c"/></svg>
<div class="t" style="top:431px;font-size:8.25px;color:#0d0d0d;letter-spacing:-0.1px;left:780.50px;">Pendel</div>
<svg width="1859" height="1176"><path d="M870.3,430.3 L875.7,435.7 M875.7,430.3 L870.3,435.7" stroke="#1a1a1a" stroke-width="2.8" stroke-linecap="round" fill="none"/><path d="M870.3,430.3 L875.7,435.7 M875.7,430.3 L870.3,435.7" stroke="#fff" stroke-width="1.2" stroke-linecap="round" fill="none"/></svg>
<div class="t" style="top:446px;font-size:8.25px;color:#0d0d0d;letter-spacing:-0.1px;left:769.20px;">Space:</div>
<div class="b" style="left:806.20px;top:441.20px;width:74.60px;height:13.90px;border:1px solid #191919;border-radius:3.5px;background:linear-gradient(#555,#373737);box-shadow:0 1px 0 rgba(255,255,255,0.1);"></div>
<svg width="1859" height="1176"><path d="M875.6,443.9 l2,3.2 h-4z M875.6,452.3 l2,-3.2 h-4z" fill="#b4b4b4"/></svg>
<div class="t" style="top:446px;font-size:8.25px;color:#fff;letter-spacing:-0.1px;left:811.40px;text-shadow:0 1px 0 rgba(0,0,0,0.6);">World</div>
<div class="t" style="top:461px;font-size:8.25px;color:#0d0d0d;letter-spacing:-0.1px;left:769.20px;">Location:</div>
<div class="b" style="left:763.90px;top:472.10px;width:55.60px;height:13.40px;border:1px solid #191919;border-radius:6.7px;background:linear-gradient(#a2a2a2,#b6b6b6);box-shadow:0 1px 0 rgba(255,255,255,0.12);"></div>
<svg width="1859" height="1176"><path d="M767.8,478.8 l2.8,-2.3 v4.6z M815.6,478.8 l-2.8,-2.3 v4.6z" fill="#707070"/></svg>
<div class="t" style="top:476px;font-size:8.25px;color:#0d0d0d;letter-spacing:-0.1px;left:773.40px;">x:</div>
<div class="t" style="top:476px;font-size:8.25px;color:#0d0d0d;letter-spacing:-0.1px;right:1052.40px;letter-spacing:0.3px;">0.00</div>
<div class="b" style="left:827.10px;top:473.80px;width:9.40px;height:9.40px;border:1px solid #191919;border-radius:3.4px;background:linear-gradient(#555,#3a3a3a);box-shadow:0 1px 0 rgba(255,255,255,0.1);"></div>
<div class="t" style="top:476px;font-size:8.25px;color:#0d0d0d;letter-spacing:-0.1px;left:841.30px;">Variable</div>
<div class="b" style="left:763.90px;top:487.15px;width:55.60px;height:13.40px;border:1px solid #191919;border-radius:6.7px;background:linear-gradient(#a2a2a2,#b6b6b6);box-shadow:0 1px 0 rgba(255,255,255,0.12);"></div>
<svg width="1859" height="1176"><path d="M767.8,493.8 l2.8,-2.3 v4.6z M815.6,493.8 l-2.8,-2.3 v4.6z" fill="#707070"/></svg>
<div class="t" style="top:491px;font-size:8.25px;color:#0d0d0d;letter-spacing:-0.1px;left:773.40px;">y:</div>
<div class="t" style="top:491px;font-size:8.25px;color:#0d0d0d;letter-spacing:-0.1px;right:1052.40px;letter-spacing:0.3px;">0.00</div>
<div class="b" style="left:827.10px;top:488.85px;width:9.40px;height:9.40px;border:1px solid #191919;border-radius:3.4px;background:linear-gradient(#555,#3a3a3a);box-shadow:0 1px 0 rgba(255,255,255,0.1);"></div>
<div class="t" style="top:491px;font-size:8.25px;color:#0d0d0d;letter-spacing:-0.1px;left:841.30px;">Variable</div>
<div class="b" style="left:763.90px;top:502.20px;width:55.60px;height:13.40px;border:1px solid #191919;border-radius:6.7px;background:linear-gradient(#a2a2a2,#b6b6b6);box-shadow:0 1px 0 rgba(255,255,255,0.12);"></div>
<svg width="1859" height="1176"><path d="M767.8,508.9 l2.8,-2.3 v4.6z M815.6,508.9 l-2.8,-2.3 v4.6z" fill="#707070"/></svg>
<div class="t" style="top:506px;font-size:8.25px;color:#0d0d0d;letter-spacing:-0.1px;left:773.40px;">z:</div>
<div class="t" style="top:506px;font-size:8.25px;color:#0d0d0d;letter-spacing:-0.1px;right:1052.40px;letter-spacing:0.3px;">0.00</div>
<div class="b" style="left:827.10px;top:503.90px;width:9.40px;height:9.40px;border:1px solid #191919;border-radius:3.4px;background:linear-gradient(#555,#3a3a3a);box-shadow:0 1px 0 rgba(255,255,255,0.1);"></div>
<div class="t" style="top:506px;font-size:8.25px;color:#0d0d0d;letter-spacing:-0.1px;left:841.30px;">Variable</div>
<div class="t" style="top:522px;font-size:8.25px;color:#0d0d0d;letter-spacing:-0.1px;left:769.20px;">Rotation:</div>
<div class="b" style="left:763.90px;top:532.50px;width:55.60px;height:13.40px;border:1px solid #191919;border-radius:6.7px;background:linear-gradient(#a2a2a2,#b6b6b6);box-shadow:0 1px 0 rgba(255,255,255,0.12);"></div>
<svg width="1859" height="1176"><path d="M767.8,539.2 l2.8,-2.3 v4.6z M815.6,539.2 l-2.8,-2.3 v4.6z" fill="#707070"/></svg>
<div class="t" style="top:536px;font-size:8.25px;color:#0d0d0d;letter-spacing:-0.1px;left:773.40px;">x:</div>
<div class="t" style="top:536px;font-size:8.25px;color:#0d0d0d;letter-spacing:-0.1px;right:1051.60px;letter-spacing:0.3px;">0°</div>
<div class="b" style="left:827.10px;top:534.20px;width:9.40px;height:9.40px;border:1px solid #191919;border-radius:3.4px;background:linear-gradient(#555,#3a3a3a);box-shadow:0 1px 0 rgba(255,255,255,0.1);"></div>
<div class="t" style="top:537px;font-size:8.25px;color:#0d0d0d;letter-spacing:-0.1px;left:841.30px;">Variable</div>
<div class="b" style="left:763.90px;top:547.55px;width:55.60px;height:13.40px;border:1px solid #191919;border-radius:6.7px;background:linear-gradient(#a2a2a2,#b6b6b6);box-shadow:0 1px 0 rgba(255,255,255,0.12);"></div>
<svg width="1859" height="1176"><path d="M767.8,554.2 l2.8,-2.3 v4.6z M815.6,554.2 l-2.8,-2.3 v4.6z" fill="#707070"/></svg>
<div class="t" style="top:552px;font-size:8.25px;color:#0d0d0d;letter-spacing:-0.1px;left:773.40px;">y:</div>
<div class="t" style="top:552px;font-size:8.25px;color:#0d0d0d;letter-spacing:-0.1px;right:1051.60px;letter-spacing:0.3px;">0°</div>
<div class="b" style="left:827.10px;top:549.25px;width:9.40px;height:9.40px;border:1px solid #191919;border-radius:3.4px;background:linear-gradient(#555,#3a3a3a);box-shadow:0 1px 0 rgba(255,255,255,0.1);"></div>
<div class="t" style="top:552px;font-size:8.25px;color:#0d0d0d;letter-spacing:-0.1px;left:841.30px;">Variable</div>
<div class="b" style="left:763.90px;top:562.60px;width:55.60px;height:13.40px;border:1px solid #191919;border-radius:6.7px;background:linear-gradient(#a2a2a2,#b6b6b6);box-shadow:0 1px 0 rgba(255,255,255,0.12);"></div>
<svg width="1859" height="1176"><path d="M767.8,569.3 l2.8,-2.3 v4.6z M815.6,569.3 l-2.8,-2.3 v4.6z" fill="#707070"/></svg>
<div class="t" style="top:567px;font-size:8.25px;color:#0d0d0d;letter-spacing:-0.1px;left:773.40px;">z:</div>
<div class="t" style="top:567px;font-size:8.25px;color:#0d0d0d;letter-spacing:-0.1px;right:1051.60px;letter-spacing:0.3px;">22°</div>
<div class="b" style="left:827.10px;top:564.30px;width:9.40px;height:9.40px;border:1px solid #191919;border-radius:3.4px;background:linear-gradient(#555,#3a3a3a);box-shadow:0 1px 0 rgba(255,255,255,0.1);"></div>
<div class="t" style="top:567px;font-size:8.25px;color:#0d0d0d;letter-spacing:-0.1px;left:841.30px;">Variable</div>
<div class="t" style="top:582px;font-size:8.25px;color:#0d0d0d;letter-spacing:-0.1px;left:769.20px;">Scale:</div>
<div class="b" style="left:763.90px;top:592.80px;width:57.50px;height:13.10px;border:1px solid #191919;border-radius:6.55px;background:linear-gradient(#a2a2a2,#b6b6b6);box-shadow:0 1px 0 rgba(255,255,255,0.12);"></div>
<svg width="1859" height="1176"><path d="M767.8,599.3 l2.8,-2.3 v4.6z M817.5,599.3 l-2.8,-2.3 v4.6z" fill="#707070"/></svg>
<div class="t" style="top:597px;font-size:8.25px;color:#0d0d0d;letter-spacing:-0.1px;right:1049.80px;letter-spacing:0.3px;">1.00</div>
<div class="b" style="left:824.30px;top:594.10px;width:9.40px;height:9.40px;border:1px solid #191919;border-radius:3.4px;background:linear-gradient(#555,#3a3a3a);box-shadow:0 1px 0 rgba(255,255,255,0.1);"></div>
<div class="t" style="top:597px;font-size:8.25px;color:#0d0d0d;letter-spacing:-0.1px;left:838.20px;">Variable</div>
<div class="t" style="top:612px;font-size:8.25px;color:#0d0d0d;letter-spacing:-0.1px;left:769.20px;">Duration:</div>
<div class="b" style="left:764.50px;top:623.00px;width:59.80px;height:12.90px;border:1px solid #191919;border-radius:3.5px;background:linear-gradient(#999,#b4b4b4);box-shadow:0 1px 0 rgba(255,255,255,0.12);"></div>
<svg width="1859" height="1176"><circle cx="771.9" cy="629.9" r="1.2" fill="#111"/></svg>
<div class="t" style="top:627px;font-size:8.25px;color:#0d0d0d;letter-spacing:-0.1px;left:779.00px;">speed</div>
<svg width="1859" height="1176"><path d="M815.4,626.9 L820.8,632.3 M820.8,626.9 L815.4,632.3" stroke="#1a1a1a" stroke-width="2.8" stroke-linecap="round" fill="none"/><path d="M815.4,626.9 L820.8,632.3 M820.8,626.9 L815.4,632.3" stroke="#fff" stroke-width="1.2" stroke-linecap="round" fill="none"/></svg>
<div class="b" style="left:827.30px;top:624.70px;width:9.40px;height:9.40px;border:1px solid #191919;border-radius:3.4px;background:linear-gradient(#555,#3a3a3a);box-shadow:0 1px 0 rgba(255,255,255,0.1);"></div>
<svg width="1859" height="1176"><path d="M829.4,628.5 L831.9,631.4 L836.0,625.0" stroke="#262626" stroke-width="2.3" fill="none" stroke-linejoin="round" stroke-linecap="round"/><path d="M829.4,628.5 L831.9,631.4 L836.0,625.0" stroke="#eee" stroke-width="1.2" fill="none" stroke-linejoin="round" stroke-linecap="round"/></svg>
<div class="t" style="top:627px;font-size:8.25px;color:#fff;letter-spacing:-0.1px;left:841.30px;text-shadow:0 1px 0 rgba(0,0,0,0.6);">Variable</div>
<div class="t" style="top:645px;font-size:8.25px;color:#0d0d0d;letter-spacing:-0.1px;left:769.20px;">Previous</div>
<div class="b" style="left:1257.50px;top:359.00px;width:130.80px;height:280.60px;border-radius:5.5px;background:rgba(114,114,114,0.60);box-shadow:0 0 2.5px 0.6px rgba(0,0,0,0.55),0 2px 9px 1px rgba(0,0,0,0.36);overflow:hidden;"></div>
<div class="b" style="left:1257.50px;top:359.00px;width:130.80px;height:14.20px;border-radius:5.5px 5.5px 0 0;background:rgba(30,30,30,0.23);"></div>
<svg width="1859" height="1176"><path d="M1260.9,363.6 h6.8 l-3.4,6z" fill="rgba(45,45,45,0.75)"/></svg>
<div class="t" style="top:364px;font-size:8.25px;color:#0d0d0d;letter-spacing:-0.1px;left:1272.40px;">Transform Object</div>
<div class="t" style="top:381px;font-size:8.25px;color:#0d0d0d;letter-spacing:-0.1px;right:487.60px;">Next</div>
<div class="t" style="top:399px;font-size:8.25px;color:#0d0d0d;letter-spacing:-0.1px;left:1269.00px;">Object:</div>
<div class="b" style="left:1264.30px;top:408.90px;width:116.30px;height:13.90px;border:1px solid #191919;border-radius:3.5px;background:linear-gradient(#999,#b4b4b4);box-shadow:0 1px 0 rgba(255,255,255,0.12);"></div>
<svg width="1859" height="1176"><polygon points="1272.08,411.10 1276.35,413.19 1276.35,418.32 1272.08,420.60 1267.80,418.32 1267.80,413.19" fill="#6b3d10"/><polygon points="1272.08,411.86 1275.59,413.48 1272.08,415.28 1268.56,413.48" fill="#fbe3c3"/><polygon points="1268.56,414.14 1271.79,415.85 1271.79,419.75 1268.56,417.94" fill="#f0a04a"/><polygon points="1275.59,414.14 1272.45,415.85 1272.45,419.75 1275.59,417.94" fill="#d67a1c"/></svg>
<div class="t" style="top:414px;font-size:8.25px;color:#0d0d0d;letter-spacing:-0.1px;left:1280.30px;">Pendel</div>
<svg width="1859" height="1176"><path d="M1370.1,413.3 L1375.5,418.7 M1375.5,413.3 L1370.1,418.7" stroke="#1a1a1a" stroke-width="2.8" stroke-linecap="round" fill="none"/><path d="M1370.1,413.3 L1375.5,418.7 M1375.5,413.3 L1370.1,418.7" stroke="#fff" stroke-width="1.2" stroke-linecap="round" fill="none"/></svg>
<div class="t" style="top:429px;font-size:8.25px;color:#0d0d0d;letter-spacing:-0.1px;left:1269.00px;">Space:</div>
<div class="b" style="left:1306.00px;top:424.20px;width:74.60px;height:13.90px;border:1px solid #191919;border-radius:3.5px;background:linear-gradient(#555,#373737);box-shadow:0 1px 0 rgba(255,255,255,0.1);"></div>
<svg width="1859" height="1176"><path d="M1375.4,426.9 l2,3.2 h-4z M1375.4,435.3 l2,-3.2 h-4z" fill="#b4b4b4"/></svg>
<div class="t" style="top:429px;font-size:8.25px;color:#fff;letter-spacing:-0.1px;left:1311.20px;text-shadow:0 1px 0 rgba(0,0,0,0.6);">World</div>
<div class="t" style="top:444px;font-size:8.25px;color:#0d0d0d;letter-spacing:-0.1px;left:1269.00px;">Location:</div>
<div class="b" style="left:1263.70px;top:455.10px;width:56.51px;height:13.40px;border:1px solid #191919;border-radius:6.7px;background:linear-gradient(#a2a2a2,#b6b6b6);box-shadow:0 1px 0 rgba(255,255,255,0.12);"></div>
<svg width="1859" height="1176"><path d="M1267.6,461.8 l2.8,-2.3 v4.6z M1316.3,461.8 l-2.8,-2.3 v4.6z" fill="#707070"/></svg>
<div class="t" style="top:459px;font-size:8.25px;color:#0d0d0d;letter-spacing:-0.1px;left:1273.20px;">x:</div>
<div class="t" style="top:459px;font-size:8.25px;color:#0d0d0d;letter-spacing:-0.1px;right:551.90px;letter-spacing:0.3px;">0.00</div>
<div class="b" style="left:1326.90px;top:456.80px;width:9.40px;height:9.40px;border:1px solid #191919;border-radius:3.4px;background:linear-gradient(#555,#3a3a3a);box-shadow:0 1px 0 rgba(255,255,255,0.1);"></div>
<div class="t" style="top:459px;font-size:8.25px;color:#0d0d0d;letter-spacing:-0.1px;left:1341.10px;">Variable</div>
<div class="b" style="left:1263.70px;top:470.15px;width:56.51px;height:13.40px;border:1px solid #191919;border-radius:6.7px;background:linear-gradient(#a2a2a2,#b6b6b6);box-shadow:0 1px 0 rgba(255,255,255,0.12);"></div>
<svg width="1859" height="1176"><path d="M1267.6,476.8 l2.8,-2.3 v4.6z M1316.3,476.8 l-2.8,-2.3 v4.6z" fill="#707070"/></svg>
<div class="t" style="top:474px;font-size:8.25px;color:#0d0d0d;letter-spacing:-0.1px;left:1273.20px;">y:</div>
<div class="t" style="top:474px;font-size:8.25px;color:#0d0d0d;letter-spacing:-0.1px;right:551.90px;letter-spacing:0.3px;">0.00</div>
<div class="b" style="left:1326.90px;top:471.85px;width:9.40px;height:9.40px;border:1px solid #191919;border-radius:3.4px;background:linear-gradient(#555,#3a3a3a);box-shadow:0 1px 0 rgba(255,255,255,0.1);"></div>
<div class="t" style="top:474px;font-size:8.25px;color:#0d0d0d;letter-spacing:-0.1px;left:1341.10px;">Variable</div>
<div class="b" style="left:1263.70px;top:485.20px;width:56.51px;height:13.40px;border:1px solid #191919;border-radius:6.7px;background:linear-gradient(#a2a2a2,#b6b6b6);box-shadow:0 1px 0 rgba(255,255,255,0.12);"></div>
<svg width="1859" height="1176"><path d="M1267.6,491.9 l2.8,-2.3 v4.6z M1316.3,491.9 l-2.8,-2.3 v4.6z" fill="#707070"/></svg>
<div class="t" style="top:489px;font-size:8.25px;color:#0d0d0d;letter-spacing:-0.1px;left:1273.20px;">z:</div>
<div class="t" style="top:489px;font-size:8.25px;color:#0d0d0d;letter-spacing:-0.1px;right:551.90px;letter-spacing:0.3px;">0.00</div>
<div class="b" style="left:1326.90px;top:486.90px;width:9.40px;height:9.40px;border:1px solid #191919;border-radius:3.4px;background:linear-gradient(#555,#3a3a3a);box-shadow:0 1px 0 rgba(255,255,255,0.1);"></div>
<div class="t" style="top:489px;font-size:8.25px;color:#0d0d0d;letter-spacing:-0.1px;left:1341.10px;">Variable</div>
<div class="t" style="top:504px;font-size:8.25px;color:#0d0d0d;letter-spacing:-0.1px;left:1269.00px;">Rotation:</div>
<div class="b" style="left:1263.70px;top:515.50px;width:56.51px;height:13.40px;border:1px solid #191919;border-radius:6.7px;background:linear-gradient(#a2a2a2,#b6b6b6);box-shadow:0 1px 0 rgba(255,255,255,0.12);"></div>
<svg width="1859" height="1176"><path d="M1267.6,522.2 l2.8,-2.3 v4.6z M1316.3,522.2 l-2.8,-2.3 v4.6z" fill="#707070"/></svg>
<div class="t" style="top:520px;font-size:8.25px;color:#0d0d0d;letter-spacing:-0.1px;left:1273.20px;">x:</div>
<div class="t" style="top:520px;font-size:8.25px;color:#0d0d0d;letter-spacing:-0.1px;right:551.10px;letter-spacing:0.3px;">0°</div>
<div class="b" style="left:1326.90px;top:517.20px;width:9.40px;height:9.40px;border:1px solid #191919;border-radius:3.4px;background:linear-gradient(#555,#3a3a3a);box-shadow:0 1px 0 rgba(255,255,255,0.1);"></div>
<div class="t" style="top:520px;font-size:8.25px;color:#0d0d0d;letter-spacing:-0.1px;left:1341.10px;">Variable</div>
<div class="b" style="left:1263.70px;top:530.55px;width:56.51px;height:13.40px;border:1px solid #191919;border-radius:6.7px;background:linear-gradient(#a2a2a2,#b6b6b6);box-shadow:0 1px 0 rgba(255,255,255,0.12);"></div>
<svg width="1859" height="1176"><path d="M1267.6,537.2 l2.8,-2.3 v4.6z M1316.3,537.2 l-2.8,-2.3 v4.6z" fill="#707070"/></svg>
<div class="t" style="top:535px;font-size:8.25px;color:#0d0d0d;letter-spacing:-0.1px;left:1273.20px;">y:</div>
<div class="t" style="top:535px;font-size:8.25px;color:#0d0d0d;letter-spacing:-0.1px;right:551.10px;letter-spacing:0.3px;">0°</div>
<div class="b" style="left:1326.90px;top:532.25px;width:9.40px;height:9.40px;border:1px solid #191919;border-radius:3.4px;background:linear-gradient(#555,#3a3a3a);box-shadow:0 1px 0 rgba(255,255,255,0.1);"></div>
<div class="t" style="top:535px;font-size:8.25px;color:#0d0d0d;letter-spacing:-0.1px;left:1341.10px;">Variable</div>
<div class="b" style="left:1263.70px;top:545.60px;width:56.51px;height:13.40px;border:1px solid #191919;border-radius:6.7px;background:linear-gradient(#a2a2a2,#b6b6b6);box-shadow:0 1px 0 rgba(255,255,255,0.12);"></div>
<svg width="1859" height="1176"><path d="M1267.6,552.3 l2.8,-2.3 v4.6z M1316.3,552.3 l-2.8,-2.3 v4.6z" fill="#707070"/></svg>
<div class="t" style="top:550px;font-size:8.25px;color:#0d0d0d;letter-spacing:-0.1px;left:1273.20px;">z:</div>
<div class="t" style="top:550px;font-size:8.25px;color:#0d0d0d;letter-spacing:-0.1px;right:551.10px;letter-spacing:0.3px;">-22°</div>
<div class="b" style="left:1326.90px;top:547.30px;width:9.40px;height:9.40px;border:1px solid #191919;border-radius:3.4px;background:linear-gradient(#555,#3a3a3a);box-shadow:0 1px 0 rgba(255,255,255,0.1);"></div>
<div class="t" style="top:550px;font-size:8.25px;color:#0d0d0d;letter-spacing:-0.1px;left:1341.10px;">Variable</div>
<div class="t" style="top:565px;font-size:8.25px;color:#0d0d0d;letter-spacing:-0.1px;left:1269.00px;">Scale:</div>
<div class="b" style="left:1263.70px;top:575.80px;width:58.41px;height:13.10px;border:1px solid #191919;border-radius:6.55px;background:linear-gradient(#a2a2a2,#b6b6b6);box-shadow:0 1px 0 rgba(255,255,255,0.12);"></div>
<svg width="1859" height="1176"><path d="M1267.6,582.3 l2.8,-2.3 v4.6z M1318.2,582.3 l-2.8,-2.3 v4.6z" fill="#707070"/></svg>
<div class="t" style="top:580px;font-size:8.25px;color:#0d0d0d;letter-spacing:-0.1px;right:549.30px;letter-spacing:0.3px;">1.00</div>
<div class="b" style="left:1324.10px;top:577.10px;width:9.40px;height:9.40px;border:1px solid #191919;border-radius:3.4px;background:linear-gradient(#555,#3a3a3a);box-shadow:0 1px 0 rgba(255,255,255,0.1);"></div>
<div class="t" style="top:580px;font-size:8.25px;color:#0d0d0d;letter-spacing:-0.1px;left:1338.00px;">Variable</div>
<div class="t" style="top:595px;font-size:8.25px;color:#0d0d0d;letter-spacing:-0.1px;left:1269.00px;">Duration:</div>
<div class="b" style="left:1264.30px;top:606.00px;width:60.71px;height:12.90px;border:1px solid #191919;border-radius:3.5px;background:linear-gradient(#999,#b4b4b4);box-shadow:0 1px 0 rgba(255,255,255,0.12);"></div>
<svg width="1859" height="1176"><circle cx="1271.7" cy="612.9" r="1.2" fill="#111"/></svg>
<div class="t" style="top:610px;font-size:8.25px;color:#0d0d0d;letter-spacing:-0.1px;left:1278.80px;">speed</div>
<svg width="1859" height="1176"><path d="M1316.1,609.9 L1321.5,615.3 M1321.5,609.9 L1316.1,615.3" stroke="#1a1a1a" stroke-width="2.8" stroke-linecap="round" fill="none"/><path d="M1316.1,609.9 L1321.5,615.3 M1321.5,609.9 L1316.1,615.3" stroke="#fff" stroke-width="1.2" stroke-linecap="round" fill="none"/></svg>
<div class="b" style="left:1327.10px;top:607.70px;width:9.40px;height:9.40px;border:1px solid #191919;border-radius:3.4px;background:linear-gradient(#555,#3a3a3a);box-shadow:0 1px 0 rgba(255,255,255,0.1);"></div>
<svg width="1859" height="1176"><path d="M1329.2,611.5 L1331.7,614.4 L1335.8,608.0" stroke="#262626" stroke-width="2.3" fill="none" stroke-linejoin="round" stroke-linecap="round"/><path d="M1329.2,611.5 L1331.7,614.4 L1335.8,608.0" stroke="#eee" stroke-width="1.2" fill="none" stroke-linejoin="round" stroke-linecap="round"/></svg>
<div class="t" style="top:610px;font-size:8.25px;color:#fff;letter-spacing:-0.1px;left:1341.10px;text-shadow:0 1px 0 rgba(0,0,0,0.6);">Variable</div>
<div class="t" style="top:627px;font-size:8.25px;color:#0d0d0d;letter-spacing:-0.1px;left:1269.00px;">Previous</div>
<svg width="1859" height="1176"><circle cx="264.4" cy="576.8" r="3.35" fill="#b4b439" stroke="rgba(16,16,0,0.85)" stroke-width="1.1"/><circle cx="344.9" cy="609.0" r="3.35" fill="#b4b439" stroke="rgba(16,16,0,0.85)" stroke-width="1.1"/><circle cx="482.3" cy="530.0" r="3.35" fill="#b4b439" stroke="rgba(16,16,0,0.85)" stroke-width="1.1"/><circle cx="546.6" cy="498.6" r="3.35" fill="#b4b439" stroke="rgba(16,16,0,0.85)" stroke-width="1.1"/><circle cx="677.0" cy="418.6" r="3.35" fill="#b4b439" stroke="rgba(16,16,0,0.85)" stroke-width="1.1"/><circle cx="677.0" cy="449.0" r="3.35" fill="#b4b439" stroke="rgba(16,16,0,0.85)" stroke-width="1.1"/><circle cx="630.6" cy="564.8" r="3.35" fill="#b4b439" stroke="rgba(16,16,0,0.85)" stroke-width="1.1"/><circle cx="757.0" cy="646.3" r="3.35" fill="#b4b439" stroke="rgba(16,16,0,0.85)" stroke-width="1.1"/><circle cx="887.8" cy="400.3" r="3.35" fill="#b4b439" stroke="rgba(16,16,0,0.85)" stroke-width="1.1"/><circle cx="1258.0" cy="629.2" r="3.35" fill="#b4b439" stroke="rgba(16,16,0,0.85)" stroke-width="1.1"/><circle cx="1388.5" cy="383.2" r="3.35" fill="#b4b439" stroke="rgba(16,16,0,0.85)" stroke-width="1.1"/><circle cx="1585.6" cy="813.4" r="3.35" fill="#b4b439" stroke="rgba(16,16,0,0.85)" stroke-width="1.1"/><circle cx="260.0" cy="828.0" r="3.35" fill="#b4b439" stroke="rgba(16,16,0,0.85)" stroke-width="1.1"/><circle cx="336.0" cy="860.0" r="3.35" fill="#b4b439" stroke="rgba(16,16,0,0.85)" stroke-width="1.1"/><circle cx="466.0" cy="782.0" r="3.35" fill="#b4b439" stroke="rgba(16,16,0,0.85)" stroke-width="1.1"/><circle cx="466.0" cy="810.6" r="3.35" fill="#b4b439" stroke="rgba(16,16,0,0.85)" stroke-width="1.1"/><circle cx="393.8" cy="969.8" r="3.35" fill="#b4b439" stroke="rgba(16,16,0,0.85)" stroke-width="1.1"/><circle cx="538.5" cy="835.6" r="3.35" fill="#b4b439" stroke="rgba(16,16,0,0.85)" stroke-width="1.1"/><circle cx="710.2" cy="756.0" r="3.35" fill="#b4b439" stroke="rgba(16,16,0,0.85)" stroke-width="1.1"/><circle cx="677.0" cy="434.0" r="3.2" fill="rgba(70,70,70,0.35)" stroke="rgba(0,0,0,0.75)" stroke-width="1"/><circle cx="466.0" cy="796.3" r="3.2" fill="rgba(70,70,70,0.35)" stroke="rgba(0,0,0,0.75)" stroke-width="1"/></svg>
<div class="b" style="left:1661.50px;top:29.00px;width:17.50px;height:1123.00px;background:#393939;"></div>
<div class="b" style="left:4.00px;top:1134.50px;width:1675.00px;height:17.50px;background:#393939;"></div>
<div class="b" style="left:1663.00px;top:34.60px;width:11.20px;height:1095.00px;border-radius:5.6px;background:linear-gradient(90deg,#9e9e9e,#7c7c7c);box-shadow:0 0 0 1px rgba(30,30,30,0.55);"></div>
<div class="b" style="left:8.40px;top:1136.00px;width:1647.40px;height:11.40px;border-radius:5.7px;background:linear-gradient(#9e9e9e,#7c7c7c);box-shadow:0 0 0 1px rgba(30,30,30,0.55);"></div>
<div class="b" style="left:1.00px;top:50.60px;width:16.00px;height:14.20px;background:#2f2f2f;border-radius:4px;"></div>
<svg width="1859" height="1176"><path d="M10,55 v6 M7,58 h6" stroke="#707070" stroke-width="1.7" fill="none"/></svg>
<div class="b" style="left:1679.00px;top:29.00px;width:180.00px;height:1123.00px;background:#727272;border-left:1px solid #8a8a8a;"></div>
<div class="b" style="left:0.00px;top:0.00px;width:1859.00px;height:2.20px;background:#3f3e39;"></div>
<div class="b" style="left:0.00px;top:2.00px;width:3.00px;height:1176.00px;background:linear-gradient(#4a0530 0px,#730b4a 7px,#6c0a4e 45%,#690a55);"></div>
<div class="b" style="left:3.00px;top:2.00px;width:1.00px;height:1176.00px;background:linear-gradient(#b04462,#9a3c6c 40%,#84348a);"></div>
<svg width="1859" height="1176"><polygon points="3,443 3,450.4 0,447.8 0,445.6" fill="#e6e6e6"/></svg>
<div class="b" style="left:4.00px;top:2.00px;width:1855.00px;height:26.20px;background:#6b6b6b;border-top:1px solid #808080;"></div>
<div class="b" style="left:4.00px;top:28.00px;width:1855.00px;height:1.20px;background:#000;"></div>
<div class="b" style="left:4.00px;top:1152.00px;width:1855.00px;height:24.00px;background:#727272;border-top:1px solid #868686;"></div>
<div class="b" style="left:1858.00px;top:29.00px;width:1.00px;height:1123.00px;background:#666;"></div>
<div class="b" style="left:12.20px;top:6.00px;width:29.60px;height:19.60px;border:1px solid #2c2c2c;border-radius:4px;background:linear-gradient(#565656,#383838);box-shadow:0 1px 0 rgba(255,255,255,0.10);"></div>
<svg width="1859" height="1176"><defs><linearGradient id="ig" x1="0" y1="0" x2="1" y2="0.3"><stop offset="0" stop-color="#1f4384"/><stop offset="1" stop-color="#6182ba"/></linearGradient></defs><circle cx="23.9" cy="15.9" r="7.0" fill="#0c0c0c"/><circle cx="23.9" cy="15.9" r="6.1" fill="#9ab0d8"/><circle cx="23.9" cy="15.9" r="5.3" fill="url(#ig)"/><circle cx="23.9" cy="12.4" r="1.3" fill="#fff"/><path d="M22.0,14.6 h3.0 v4.4 h1.2 v1.1 h-4.4 v-1.1 h1.3 v-3.3 h-1.1z" fill="#fff"/></svg>
<svg width="1859" height="1176"><path d="M35.5,9.2 l2.8,5.6 h-5.6z M35.5,22.5 l2.8,-5.5 h-5.6z" fill="#bcbcbc"/></svg>
<div class="t" style="top:12px;font-size:11px;color:#000;left:54.40px;">File</div>
<div class="t" style="top:12px;font-size:11px;color:#000;left:92.20px;">Render</div>
<div class="t" style="top:12px;font-size:11px;color:#000;left:147.00px;">Window</div>
<div class="t" style="top:12px;font-size:11px;color:#000;left:207.20px;">Help</div>
<div class="b" style="left:243.00px;top:6.00px;width:117.60px;height:19.60px;border:1px solid #2c2c2c;border-radius:4px;background:linear-gradient(#a9a9a9,#8b8b8b);box-shadow:0 1px 0 rgba(255,255,255,0.10);"></div>
<svg width="1859" height="1176"><rect x="252.6" y="10.2" width="10" height="11.4" rx="1.3" fill="#e6e6e6" stroke="#222" stroke-width="1"/><rect x="253.8" y="11.4" width="7.6" height="6.2" fill="#d0d0d0"/><path d="M247.2,15.5 L251.8,11.6 L251.8,14.3 L256.6,14.3 A1.2,1.2 0 0 1 256.6,16.7 L251.8,16.7 L251.8,19.3 Z" fill="#fafafa" stroke="#222" stroke-width="0.9" stroke-linejoin="round"/><rect x="253.8" y="18.7" width="1.5" height="1.5" fill="#e02020"/><rect x="256.2" y="19" width="4.6" height="0.9" fill="#555"/></svg>
<div class="t" style="top:12px;font-size:11px;color:#000;left:268.40px;">Back to Previous</div>
<div class="b" style="left:388.00px;top:6.00px;width:110.80px;height:19.60px;border:1px solid #2c2c2c;border-radius:4px;background:linear-gradient(#565656,#383838);box-shadow:0 1px 0 rgba(255,255,255,0.10);"></div>
<div class="t" style="top:12px;font-size:11px;color:#fff;left:396.40px;text-shadow:0 1px 0 rgba(0,0,0,0.55);">Blend4Web</div>
<svg width="1859" height="1176"><path d="M491.6,9.3 l2.8,5.6 h-5.6z M491.6,22.6 l2.8,-5.5 h-5.6z" fill="#bcbcbc"/></svg>
<svg width="1859" height="1176"><path d="M519.8,12.2 L525.0,12.2 L523.7,10.3 C523.4,9.4 524.5,8.9 525.2,9.5 L530.6,13.8 L524.2,15.8 L519.0,20.5 C518.2,21.1 517.1,20.1 517.8,19.2 L522.9,14.4 L519.8,14.4 C518.5,14.4 518.5,12.2 519.8,12.2 Z" fill="#f9a04a" stroke="#4a2a0c" stroke-width="0.9" stroke-linejoin="round"/><circle cx="527.1" cy="17.0" r="5.2" fill="#f28a1e" stroke="#4a2a0c" stroke-width="0.9"/><path d="M520.4,13.3 L526.5,13.3 M524.6,10.2 L528.6,13.2 M518.6,19.8 L523.6,15.0" stroke="#fbb060" stroke-width="1.3" stroke-linecap="round" fill="none"/><circle cx="527.1" cy="17.1" r="3.3" fill="#fff"/><circle cx="527.1" cy="17.1" r="2.05" fill="#2a5aa8"/></svg>
<div class="t" style="top:12px;font-size:11px;color:#000;left:543.40px;word-spacing:0.95px;">v2.77 | Verts:16 | Faces:4 | Tris:8 | Objects:0/5 | Lamps:0/0 | Mem:22.63M | start</div>
<svg width="1859" height="1176"><path d="M1692.2,37.4 h8.2 l-4.1,7.4z" fill="#1a1a1a"/></svg>
<div class="t" style="top:36px;font-size:12px;color:#000;left:1704.40px;">Node</div>
<svg width="1859" height="1176"><rect x="1838" y="40" width="1" height="1" fill="#d6d6d6"/><rect x="1838" y="41" width="1" height="1" fill="#1c1c1c"/><rect x="1841" y="40" width="1" height="1" fill="#d6d6d6"/><rect x="1841" y="41" width="1" height="1" fill="#1c1c1c"/><rect x="1844" y="40" width="1" height="1" fill="#d6d6d6"/><rect x="1844" y="41" width="1" height="1" fill="#1c1c1c"/><rect x="1847" y="40" width="1" height="1" fill="#d6d6d6"/><rect x="1847" y="41" width="1" height="1" fill="#1c1c1c"/><rect x="1838" y="43" width="1" height="1" fill="#d6d6d6"/><rect x="1838" y="44" width="1" height="1" fill="#1c1c1c"/><rect x="1841" y="43" width="1" height="1" fill="#d6d6d6"/><rect x="1841" y="44" width="1" height="1" fill="#1c1c1c"/><rect x="1844" y="43" width="1" height="1" fill="#d6d6d6"/><rect x="1844" y="44" width="1" height="1" fill="#1c1c1c"/><rect x="1847" y="43" width="1" height="1" fill="#d6d6d6"/><rect x="1847" y="44" width="1" height="1" fill="#1c1c1c"/></svg>
<div class="t" style="top:67px;font-size:11px;color:#000;left:1695.60px;">Name:</div>
<div class="b" style="left:1746.20px;top:61.00px;width:104.60px;height:19.60px;border:1px solid #2c2c2c;border-radius:4px;background:linear-gradient(#999,#b4b4b4);box-shadow:0 1px 0 rgba(255,255,255,0.10);"></div>
<svg width="1859" height="1176"><rect x="1751.6" y="63.4" width="13.4" height="15" rx="1.6" fill="#f2f2f2" stroke="#2c2c2c" stroke-width="1"/><rect x="1753.8" y="65.4" width="8" height="1.2" fill="#777"/><rect x="1754.1999999999998" y="68.0" width="4.6" height="4.2" fill="#555"/><rect x="1757.8" y="71.6" width="4.6" height="4.2" fill="#8a8a8a"/><rect x="1754.1999999999998" y="72.2" width="3.6" height="3.6" fill="#c9c9c9"/></svg>
<div class="t" style="top:67px;font-size:11px;color:#000;left:1770.40px;">B4WLogicNo...</div>
<div class="t" style="top:92px;font-size:11px;color:#000;left:1695.60px;">Label:</div>
<div class="b" style="left:1746.20px;top:86.00px;width:104.60px;height:19.60px;border:1px solid #2c2c2c;border-radius:4px;background:linear-gradient(#999,#b4b4b4);box-shadow:0 1px 0 rgba(255,255,255,0.10);"></div>
<svg width="1859" height="1176"><rect x="1751.6" y="88.4" width="13.4" height="15" rx="1.6" fill="#f2f2f2" stroke="#2c2c2c" stroke-width="1"/><rect x="1753.8" y="90.4" width="8" height="1.2" fill="#777"/><rect x="1754.1999999999998" y="93.0" width="4.6" height="4.2" fill="#555"/><rect x="1757.8" y="96.60000000000001" width="4.6" height="4.2" fill="#8a8a8a"/><rect x="1754.1999999999998" y="97.2" width="3.6" height="3.6" fill="#c9c9c9"/></svg>
<div class="b" style="left:1684.00px;top:112.70px;width:170.00px;height:1.00px;background:#505050;"></div>
<div class="b" style="left:1684.00px;top:113.70px;width:170.00px;height:1.00px;background:#7d7d7d;"></div>
<svg width="1859" height="1176"><path d="M1692.6,122.0 v8.2 l7.6,-4.1z" fill="#1a1a1a"/></svg>
<div class="t" style="top:121px;font-size:12px;color:#000;left:1724.60px;">Color</div>
<svg width="1859" height="1176"><rect x="1838" y="125" width="1" height="1" fill="#d6d6d6"/><rect x="1838" y="126" width="1" height="1" fill="#1c1c1c"/><rect x="1841" y="125" width="1" height="1" fill="#d6d6d6"/><rect x="1841" y="126" width="1" height="1" fill="#1c1c1c"/><rect x="1844" y="125" width="1" height="1" fill="#d6d6d6"/><rect x="1844" y="126" width="1" height="1" fill="#1c1c1c"/><rect x="1847" y="125" width="1" height="1" fill="#d6d6d6"/><rect x="1847" y="126" width="1" height="1" fill="#1c1c1c"/><rect x="1838" y="128" width="1" height="1" fill="#d6d6d6"/><rect x="1838" y="129" width="1" height="1" fill="#1c1c1c"/><rect x="1841" y="128" width="1" height="1" fill="#d6d6d6"/><rect x="1841" y="129" width="1" height="1" fill="#1c1c1c"/><rect x="1844" y="128" width="1" height="1" fill="#d6d6d6"/><rect x="1844" y="129" width="1" height="1" fill="#1c1c1c"/><rect x="1847" y="128" width="1" height="1" fill="#d6d6d6"/><rect x="1847" y="129" width="1" height="1" fill="#1c1c1c"/></svg>
<div class="b" style="left:1704.20px;top:119.60px;width:13.60px;height:13.40px;border:1px solid #2c2c2c;border-radius:3.6px;background:linear-gradient(#565656,#383838);box-shadow:0 1px 0 rgba(255,255,255,0.10);"></div>
<div class="b" style="left:1684.00px;top:137.30px;width:170.00px;height:1.00px;background:#505050;"></div>
<div class="b" style="left:1684.00px;top:138.30px;width:170.00px;height:1.00px;background:#7d7d7d;"></div>
<svg width="1859" height="1176"><path d="M1692.2,146.3 h8.2 l-4.1,7.4z" fill="#1a1a1a"/></svg>
<div class="t" style="top:144px;font-size:12px;color:#000;left:1704.40px;">Properties</div>
<svg width="1859" height="1176"><rect x="1838" y="149" width="1" height="1" fill="#d6d6d6"/><rect x="1838" y="150" width="1" height="1" fill="#1c1c1c"/><rect x="1841" y="149" width="1" height="1" fill="#d6d6d6"/><rect x="1841" y="150" width="1" height="1" fill="#1c1c1c"/><rect x="1844" y="149" width="1" height="1" fill="#d6d6d6"/><rect x="1844" y="150" width="1" height="1" fill="#1c1c1c"/><rect x="1847" y="149" width="1" height="1" fill="#d6d6d6"/><rect x="1847" y="150" width="1" height="1" fill="#1c1c1c"/><rect x="1838" y="152" width="1" height="1" fill="#d6d6d6"/><rect x="1838" y="153" width="1" height="1" fill="#1c1c1c"/><rect x="1841" y="152" width="1" height="1" fill="#d6d6d6"/><rect x="1841" y="153" width="1" height="1" fill="#1c1c1c"/><rect x="1844" y="152" width="1" height="1" fill="#d6d6d6"/><rect x="1844" y="153" width="1" height="1" fill="#1c1c1c"/><rect x="1847" y="152" width="1" height="1" fill="#d6d6d6"/><rect x="1847" y="153" width="1" height="1" fill="#1c1c1c"/></svg>
<div class="t" style="top:176px;font-size:11px;color:#000;left:1695.50px;">Object:</div>
<div class="b" style="left:1687.30px;top:192.00px;width:163.60px;height:19.60px;border:1px solid #2c2c2c;border-radius:4px;background:linear-gradient(#999,#b4b4b4);box-shadow:0 1px 0 rgba(255,255,255,0.10);"></div>
<svg width="1859" height="1176"><polygon points="1699.19,195.00 1705.58,198.12 1705.58,205.79 1699.19,209.20 1692.80,205.79 1692.80,198.12" fill="#6b3d10"/><polygon points="1699.19,196.14 1704.44,198.55 1699.19,201.25 1693.94,198.55" fill="#fbe3c3"/><polygon points="1693.94,199.54 1698.76,202.10 1698.76,207.92 1693.94,205.22" fill="#f0a04a"/><polygon points="1704.44,199.54 1699.76,202.10 1699.76,207.92 1704.44,205.22" fill="#d67a1c"/></svg>
<div class="t" style="top:198px;font-size:11px;color:#000;left:1711.40px;">start</div>
<svg width="1859" height="1176"><path d="M1836.6,197.8 L1845.0,206.2 M1845.0,197.8 L1836.6,206.2" stroke="#1a1a1a" stroke-width="3.3" stroke-linecap="round" fill="none"/><path d="M1836.6,197.8 L1845.0,206.2 M1845.0,197.8 L1836.6,206.2" stroke="#fff" stroke-width="1.7" stroke-linecap="round" fill="none"/></svg>
<div class="b" style="left:1684.00px;top:219.00px;width:170.00px;height:1.00px;background:#505050;"></div>
<div class="b" style="left:1684.00px;top:220.00px;width:170.00px;height:1.00px;background:#7d7d7d;"></div>
<svg width="1859" height="1176"><path d="M1692.2,228.4 h8.2 l-4.1,7.4z" fill="#1a1a1a"/></svg>
<div class="t" style="top:227px;font-size:12px;color:#000;left:1724.40px;">Grease Pencil</div>
<svg width="1859" height="1176"><rect x="1838" y="231" width="1" height="1" fill="#d6d6d6"/><rect x="1838" y="232" width="1" height="1" fill="#1c1c1c"/><rect x="1841" y="231" width="1" height="1" fill="#d6d6d6"/><rect x="1841" y="232" width="1" height="1" fill="#1c1c1c"/><rect x="1844" y="231" width="1" height="1" fill="#d6d6d6"/><rect x="1844" y="232" width="1" height="1" fill="#1c1c1c"/><rect x="1847" y="231" width="1" height="1" fill="#d6d6d6"/><rect x="1847" y="232" width="1" height="1" fill="#1c1c1c"/><rect x="1838" y="234" width="1" height="1" fill="#d6d6d6"/><rect x="1838" y="235" width="1" height="1" fill="#1c1c1c"/><rect x="1841" y="234" width="1" height="1" fill="#d6d6d6"/><rect x="1841" y="235" width="1" height="1" fill="#1c1c1c"/><rect x="1844" y="234" width="1" height="1" fill="#d6d6d6"/><rect x="1844" y="235" width="1" height="1" fill="#1c1c1c"/><rect x="1847" y="234" width="1" height="1" fill="#d6d6d6"/><rect x="1847" y="235" width="1" height="1" fill="#1c1c1c"/></svg>
<div class="b" style="left:1704.20px;top:225.80px;width:13.80px;height:13.40px;border:1px solid #2c2c2c;border-radius:3.6px;background:linear-gradient(#565656,#383838);box-shadow:0 1px 0 rgba(255,255,255,0.10);"></div>
<svg width="1859" height="1176"><path d="M1707.2,232.0 L1710.0,235.6 L1716.4,226.0" stroke="#262626" stroke-width="2.8" fill="none" stroke-linejoin="round" stroke-linecap="round"/><path d="M1707.2,232.0 L1710.0,235.6 L1716.4,226.0" stroke="#f0f0f0" stroke-width="1.5" fill="none" stroke-linejoin="round" stroke-linecap="round"/></svg>
<div class="b" style="left:1687.30px;top:252.00px;width:32.00px;height:19.60px;border:1px solid #2c2c2c;border-radius:4px 0 0 4px;background:linear-gradient(#565656,#383838);box-shadow:0 1px 0 rgba(255,255,255,0.10);"></div>
<div class="b" style="left:1718.30px;top:252.00px;width:132.60px;height:19.60px;border:1px solid #2c2c2c;border-radius:0 4px 4px 0;background:linear-gradient(#a9a9a9,#8b8b8b);box-shadow:0 1px 0 rgba(255,255,255,0.10);"></div>
<svg width="1859" height="1176"><path d="M1692.6,267.6 L1693.6,263.6 L1702.6,255.4 L1705.2,258.2 L1696.4,266.6z" fill="#9fc24a" stroke="#3a4a10" stroke-width="0.8"/><path d="M1702.6,255.4 L1704.0,254.2 C1705.2,253.4 1706.8,255.0 1706.2,256.2 L1705.2,258.2z" fill="#e05a5a" stroke="#5a1a1a" stroke-width="0.7"/><path d="M1692.6,267.6 L1693.6,263.6 L1696.4,266.6z" fill="#e8d8b0"/></svg>
<svg width="1859" height="1176"><path d="M1712.4,256.0 l2.5,5.0 h-5.0z M1712.4,267.9 l2.5,-5.0 h-5.0z" fill="#b0b0b0"/></svg>
<svg width="1859" height="1176"><path d="M1725.4,262.0 h9.4 M1730.1,257.3 v9.4" stroke="#222" stroke-width="3.6" fill="none" stroke-linecap="round"/><path d="M1725.4,262.0 h9.4 M1730.1,257.3 v9.4" stroke="#f4f4f4" stroke-width="1.9" fill="none" stroke-linecap="round"/></svg>
<div class="t" style="top:258px;font-size:11px;color:#000;left:1592.40px;width:400px;text-align:center;">New</div>
<div class="b" style="left:1687.30px;top:277.40px;width:163.60px;height:19.60px;border:1px solid #2c2c2c;border-radius:4px;background:linear-gradient(#a9a9a9,#8b8b8b);box-shadow:0 1px 0 rgba(255,255,255,0.10);"></div>
<div class="t" style="top:283px;font-size:11px;color:#000;left:1568.20px;width:400px;text-align:center;">New Layer</div>
<div class="b" style="left:13.20px;top:1155.00px;width:29.40px;height:19.60px;border:1px solid #2c2c2c;border-radius:4px;background:linear-gradient(#565656,#383838);box-shadow:0 1px 0 rgba(255,255,255,0.10);"></div>
<svg width="1859" height="1176"><path d="M29.0,1160.4 h0.8 q2.4,0 2.4,2.4 v4.4 q0,2.4 -2.4,2.4 h-3.4" fill="none" stroke="#2a3850" stroke-width="2.4"/><path d="M29.0,1160.4 h0.8 q2.4,0 2.4,2.4 v4.4 q0,2.4 -2.4,2.4 h-3.4" fill="none" stroke="#b4d0fa" stroke-width="1.2"/><rect x="20.4" y="1157.4" width="6.6" height="5.9" rx="0.9" fill="#f6f6f6" stroke="#0c0c0c" stroke-width="1.1"/><rect x="21.8" y="1158.8" width="3.8" height="1.0" fill="#555"/><rect x="27.3" y="1159.6" width="2.2" height="2.2" fill="#7a4a08"/><rect x="27.7" y="1160.0" width="1.4" height="1.4" fill="#ffb020"/><rect x="17.7" y="1166.4" width="6.6" height="5.9" rx="0.9" fill="#f6f6f6" stroke="#0c0c0c" stroke-width="1.1"/><rect x="19.1" y="1167.8" width="3.8" height="1.0" fill="#555"/><rect x="24.6" y="1168.6" width="2.2" height="2.2" fill="#7a4a08"/><rect x="25.0" y="1169.0" width="1.4" height="1.4" fill="#ffb020"/></svg>
<svg width="1859" height="1176"><path d="M36.4,1158.4 l2.7,5.3 h-5.3z M36.4,1171.1 l2.7,-5.2 h-5.3z" fill="#bcbcbc"/></svg>
<div class="t" style="top:1161px;font-size:11px;color:#000;left:55.20px;">View</div>
<div class="t" style="top:1161px;font-size:11px;color:#000;left:100.20px;">Select</div>
<div class="t" style="top:1161px;font-size:11px;color:#000;left:151.20px;">Add</div>
<div class="t" style="top:1161px;font-size:11px;color:#000;left:190.00px;">Node</div>
<div class="b" style="left:229.40px;top:1155.00px;width:20.40px;height:19.60px;border:1px solid #2c2c2c;border-radius:4px 0 0 4px;background:linear-gradient(#565656,#383838);box-shadow:0 1px 0 rgba(255,255,255,0.10);"></div>
<div class="b" style="left:248.80px;top:1155.00px;width:20.60px;height:19.60px;border:1px solid #2c2c2c;border-radius:0;background:linear-gradient(#565656,#383838);box-shadow:0 1px 0 rgba(255,255,255,0.10);"></div>
<div class="b" style="left:268.40px;top:1155.00px;width:20.60px;height:19.60px;border:1px solid #2c2c2c;border-radius:0;background:linear-gradient(#6a92d2,#4c74b4);box-shadow:0 1px 0 rgba(255,255,255,0.10);"></div>
<div class="b" style="left:288.00px;top:1155.00px;width:20.40px;height:19.60px;border:1px solid #2c2c2c;border-radius:0 4px 4px 0;background:linear-gradient(#565656,#383838);box-shadow:0 1px 0 rgba(255,255,255,0.10);"></div>
<svg width="1859" height="1176"><path d="M236.4,1160.6 l9.4,1.4 l-1.6,9.6 l-9.2,-1.6z" fill="#b8b4a4" stroke="#3a3a3a" stroke-width="0.8"/><rect x="232.4" y="1157.8" width="9.4" height="9.4" fill="#9eacc4" stroke="#3a3a3a" stroke-width="0.8"/><rect x="237.2" y="1159.8" width="2.6" height="4.6" rx="1" fill="#5a8ad0"/><circle cx="235.8" cy="1165" r="1.7" fill="#e8e8e8" stroke="#555" stroke-width="0.5"/><rect x="233" y="1158.4" width="1.6" height="1.2" fill="#e8c040"/></svg>
<svg width="1859" height="1176"><rect x="253.0" y="1158.8" width="3" height="3" fill="#7a2424"/><rect x="256.0" y="1158.8" width="3" height="3" fill="#a4a0a0"/><rect x="259.0" y="1158.8" width="3" height="3" fill="#7a2424"/><rect x="262.0" y="1158.8" width="3" height="3" fill="#a4a0a0"/><rect x="253.0" y="1161.8" width="3" height="3" fill="#a4a0a0"/><rect x="256.0" y="1161.8" width="3" height="3" fill="#7a2424"/><rect x="259.0" y="1161.8" width="3" height="3" fill="#a4a0a0"/><rect x="262.0" y="1161.8" width="3" height="3" fill="#7a2424"/><rect x="253.0" y="1164.8" width="3" height="3" fill="#7a2424"/><rect x="256.0" y="1164.8" width="3" height="3" fill="#a4a0a0"/><rect x="259.0" y="1164.8" width="3" height="3" fill="#7a2424"/><rect x="262.0" y="1164.8" width="3" height="3" fill="#a4a0a0"/><rect x="253.0" y="1167.8" width="3" height="3" fill="#a4a0a0"/><rect x="256.0" y="1167.8" width="3" height="3" fill="#7a2424"/><rect x="259.0" y="1167.8" width="3" height="3" fill="#a4a0a0"/><rect x="262.0" y="1167.8" width="3" height="3" fill="#7a2424"/><rect x="252.6" y="1158.4" width="12.8" height="12.8" fill="none" stroke="#333" stroke-width="0.9"/></svg>
<svg width="1859" height="1176"><path d="M282.2,1160.4 h0.8 q2.4,0 2.4,2.4 v4.4 q0,2.4 -2.4,2.4 h-3.4" fill="none" stroke="#2a3850" stroke-width="2.4"/><path d="M282.2,1160.4 h0.8 q2.4,0 2.4,2.4 v4.4 q0,2.4 -2.4,2.4 h-3.4" fill="none" stroke="#b4d0fa" stroke-width="1.2"/><rect x="273.6" y="1157.4" width="6.6" height="5.9" rx="0.9" fill="#f6f6f6" stroke="#0c0c0c" stroke-width="1.1"/><rect x="275.0" y="1158.8" width="3.8" height="1.0" fill="#555"/><rect x="280.5" y="1159.6" width="2.2" height="2.2" fill="#7a4a08"/><rect x="280.9" y="1160.0" width="1.4" height="1.4" fill="#ffb020"/><rect x="270.9" y="1166.4" width="6.6" height="5.9" rx="0.9" fill="#f6f6f6" stroke="#0c0c0c" stroke-width="1.1"/><rect x="272.3" y="1167.8" width="3.8" height="1.0" fill="#555"/><rect x="277.8" y="1168.6" width="2.2" height="2.2" fill="#7a4a08"/><rect x="278.2" y="1169.0" width="1.4" height="1.4" fill="#ffb020"/></svg>
<svg width="1859" height="1176"><defs><radialGradient id="sph" cx="0.4" cy="0.35" r="0.7"><stop offset="0" stop-color="#b0aaaa"/><stop offset="1" stop-color="#5a5252"/></radialGradient></defs><circle cx="298.2" cy="1164.8" r="6.2" fill="url(#sph)" stroke="#2a2a2a" stroke-width="0.9"/><path d="M298.2,1164.8 L298.2,1158.6 A6.2,6.2 0 0 1 304.4,1164.8z" fill="rgba(120,70,60,0.35)"/><path d="M298.2,1164.8 L292,1164.8 A6.2,6.2 0 0 0 298.2,1171z" fill="rgba(40,40,40,0.3)"/></svg>
<div class="b" style="left:314.40px;top:1155.00px;width:32.40px;height:19.60px;border:1px solid #2c2c2c;border-radius:4px 0 0 4px;background:linear-gradient(#565656,#383838);box-shadow:0 1px 0 rgba(255,255,255,0.10);"></div>
<svg width="1859" height="1176"><path d="M330.0,1160.4 h0.8 q2.4,0 2.4,2.4 v4.4 q0,2.4 -2.4,2.4 h-3.4" fill="none" stroke="#2a3850" stroke-width="2.4"/><path d="M330.0,1160.4 h0.8 q2.4,0 2.4,2.4 v4.4 q0,2.4 -2.4,2.4 h-3.4" fill="none" stroke="#b4d0fa" stroke-width="1.2"/><rect x="321.4" y="1157.4" width="6.6" height="5.9" rx="0.9" fill="#f6f6f6" stroke="#0c0c0c" stroke-width="1.1"/><rect x="322.8" y="1158.8" width="3.8" height="1.0" fill="#555"/><rect x="328.3" y="1159.6" width="2.2" height="2.2" fill="#7a4a08"/><rect x="328.7" y="1160.0" width="1.4" height="1.4" fill="#ffb020"/><rect x="318.7" y="1166.4" width="6.6" height="5.9" rx="0.9" fill="#f6f6f6" stroke="#0c0c0c" stroke-width="1.1"/><rect x="320.1" y="1167.8" width="3.8" height="1.0" fill="#555"/><rect x="325.6" y="1168.6" width="2.2" height="2.2" fill="#7a4a08"/><rect x="326.0" y="1169.0" width="1.4" height="1.4" fill="#ffb020"/></svg>
<svg width="1859" height="1176"><path d="M339.6,1158.4 l2.7,5.3 h-5.3z M339.6,1171.1 l2.7,-5.2 h-5.3z" fill="#bcbcbc"/></svg>
<div class="b" style="left:345.80px;top:1155.00px;width:120.60px;height:19.60px;border:1px solid #2c2c2c;border-radius:0;background:linear-gradient(#b8b8b8,#9c9c9c);box-shadow:0 1px 0 rgba(255,255,255,0.10);"></div>
<div class="t" style="top:1161px;font-size:11px;color:#000;left:353.40px;">NodeTree</div>
<div class="b" style="left:465.40px;top:1155.00px;width:25.00px;height:19.60px;border:1px solid #2c2c2c;border-radius:0;background:linear-gradient(#a9a9a9,#8b8b8b);box-shadow:0 1px 0 rgba(255,255,255,0.10);"></div>
<div class="t" style="top:1161px;font-size:11px;color:#000;left:277.60px;width:400px;text-align:center;">2</div>
<div class="b" style="left:489.40px;top:1155.00px;width:20.80px;height:19.60px;border:1px solid #2c2c2c;border-radius:0;background:linear-gradient(#5f5f5f,#505050);box-shadow:0 1px 0 rgba(255,255,255,0.10);"></div>
<div class="t" style="top:1161px;font-size:11px;color:#fff;left:299.40px;width:400px;text-align:center;text-shadow:0 1px 0 rgba(0,0,0,0.55);">F</div>
<div class="b" style="left:509.20px;top:1155.00px;width:21.00px;height:19.60px;border:1px solid #2c2c2c;border-radius:0;background:linear-gradient(#a9a9a9,#8b8b8b);box-shadow:0 1px 0 rgba(255,255,255,0.10);"></div>
<svg width="1859" height="1176"><path d="M516.2,1164.8 h8.4 M520.4,1160.6 v8.4" stroke="#222" stroke-width="3.4" fill="none" stroke-linecap="round"/><path d="M516.2,1164.8 h8.4 M520.4,1160.6 v8.4" stroke="#f4f4f4" stroke-width="1.8" fill="none" stroke-linecap="round"/></svg>
<div class="b" style="left:529.20px;top:1155.00px;width:20.40px;height:19.60px;border:1px solid #2c2c2c;border-radius:0 4px 4px 0;background:linear-gradient(#a9a9a9,#8b8b8b);box-shadow:0 1px 0 rgba(255,255,255,0.10);"></div>
<svg width="1859" height="1176"><path d="M535.6,1161.0 L543.2,1168.6 M543.2,1161.0 L535.6,1168.6" stroke="#1a1a1a" stroke-width="3.3" stroke-linecap="round" fill="none"/><path d="M535.6,1161.0 L543.2,1168.6 M543.2,1161.0 L535.6,1168.6" stroke="#fff" stroke-width="1.7" stroke-linecap="round" fill="none"/></svg>
<div class="b" style="left:555.40px;top:1155.00px;width:19.40px;height:19.60px;border:1px solid #2c2c2c;border-radius:4px;background:linear-gradient(#a9a9a9,#8b8b8b);box-shadow:0 1px 0 rgba(255,255,255,0.10);"></div>
<svg width="1859" height="1176"><path d="M558.8,1171.4 L564.4,1165.4" stroke="#333" stroke-width="1.6"/><path d="M562.2,1162.6 l5.6,5.6 l1.2,-3 l3.2,-3.2 l-3.8,-3.8 l-3.2,3.2z" fill="#dcdcdc" stroke="#2a2a2a" stroke-width="0.9"/></svg>
<div class="b" style="left:580.40px;top:1155.00px;width:19.40px;height:19.60px;border:1px solid #2c2c2c;border-radius:4px;background:linear-gradient(#939393,#858585);box-shadow:0 1px 0 rgba(255,255,255,0.10);border-color:#4a4a4a;"></div>
<svg width="1859" height="1176"><path d="M584.6,1164.2 l5.2,-5 l5.2,5 h-3.2 v4.4 h3.4 v2.6 h-7.4 v-7z" fill="#9a9a9a" stroke="#555" stroke-width="0.9"/></svg>
<div class="b" style="left:616.20px;top:1155.00px;width:19.40px;height:19.60px;border:1px solid #2c2c2c;border-radius:4px;background:linear-gradient(#5a5a5a,#424242);box-shadow:0 1px 0 rgba(255,255,255,0.10);"></div>
<svg width="1859" height="1176"><rect x="621.4" y="1157.8" width="9" height="5.6" rx="0.8" fill="#f0f0f0" stroke="#222" stroke-width="0.9"/><rect x="618.6" y="1167.4" width="5.6" height="4.6" fill="#e8e8e8" stroke="#222" stroke-width="0.8"/><rect x="627.6" y="1167.4" width="5.6" height="4.6" fill="#e8e8e8" stroke="#222" stroke-width="0.8"/><path d="M620.2,1162.6 l5.6,4.4 l5.6,-4.4" stroke="#7aa6ea" stroke-width="1.2" fill="none"/></svg>
<div class="b" style="left:641.60px;top:1155.00px;width:20.40px;height:19.60px;border:1px solid #2c2c2c;border-radius:4px 0 0 4px;background:linear-gradient(#939393,#858585);box-shadow:0 1px 0 rgba(255,255,255,0.10);border-color:#4a4a4a;"></div>
<svg width="1859" height="1176"><path d="M646.4,1168.6 l6.2,-6.6 a3.6,3.6 0 0 1 5.2,5 l-4.6,5" stroke="#555" stroke-width="3.8" fill="none"/><path d="M646.4,1168.6 l6.2,-6.6 a3.6,3.6 0 0 1 5.2,5 l-4.6,5" stroke="#9c9c9c" stroke-width="2.2" fill="none"/></svg>
<div class="b" style="left:661.00px;top:1155.00px;width:35.00px;height:19.60px;border:1px solid #2c2c2c;border-radius:0 4px 4px 0;background:linear-gradient(#565656,#383838);box-shadow:0 1px 0 rgba(255,255,255,0.10);"></div>
<svg width="1859" height="1176"><path d="M666.8,1163.6 h14.4 M666.8,1169.2 h14.4 M672.4,1158 v14.6 M677.8,1158 v14.6" stroke="#ececec" stroke-width="1.1" fill="none"/><circle cx="669.8" cy="1161.2" r="3.3" fill="#f4f4f4" stroke="#333" stroke-width="0.6"/><circle cx="669.8" cy="1161.2" r="1.7" fill="#eaf0ff" stroke="#3a6ad8" stroke-width="1.3"/></svg>
<svg width="1859" height="1176"><path d="M689.6,1158.4 l2.7,5.3 h-5.3z M689.6,1171.1 l2.7,-5.2 h-5.3z" fill="#bcbcbc"/></svg>
<div class="b" style="left:701.40px;top:1155.00px;width:20.00px;height:19.60px;border:1px solid #2c2c2c;border-radius:4px 0 0 4px;background:linear-gradient(#a9a9a9,#8b8b8b);box-shadow:0 1px 0 rgba(255,255,255,0.10);"></div>
<div class="b" style="left:720.40px;top:1155.00px;width:20.00px;height:19.60px;border:1px solid #2c2c2c;border-radius:0 4px 4px 0;background:linear-gradient(#a9a9a9,#8b8b8b);box-shadow:0 1px 0 rgba(255,255,255,0.10);"></div>
<svg width="1859" height="1176"><rect x="707.0" y="1158.4" width="10.4" height="11.6" rx="1" fill="#c9b795" stroke="#2a2a2a" stroke-width="0.9"/><rect x="709.6" y="1157.0" width="5.2" height="2.8" fill="#ddd" stroke="#2a2a2a" stroke-width="0.8"/><path d="M711.6,1165.0 l-7,7 M704.2,1167.0 v-0 M709.4,1165.0 h-0" stroke="#222" stroke-width="3" fill="none"/><path d="M712.0,1164.6 l-7.4,7.4 M707.0,1164.6 h5 v5" stroke="#222" stroke-width="3" fill="none"/><path d="M712.0,1164.6 l-7.4,7.4 M707.0,1164.6 h5 v5" stroke="#f4f4f4" stroke-width="1.5" fill="none"/></svg>
<svg width="1859" height="1176"><rect x="726.6" y="1158.4" width="10.4" height="11.6" rx="1" fill="#c9b795" stroke="#2a2a2a" stroke-width="0.9"/><rect x="729.2" y="1157.0" width="5.2" height="2.8" fill="#ddd" stroke="#2a2a2a" stroke-width="0.8"/><path d="M730.6,1165.0 l7,7 M738.0,1167.4 v5 h-5" stroke="#222" stroke-width="3" fill="none"/><path d="M730.6,1165.0 l7,7 M738.0,1167.4 v5 h-5" stroke="#f4f4f4" stroke-width="1.5" fill="none"/></svg>
</div></body></html>
